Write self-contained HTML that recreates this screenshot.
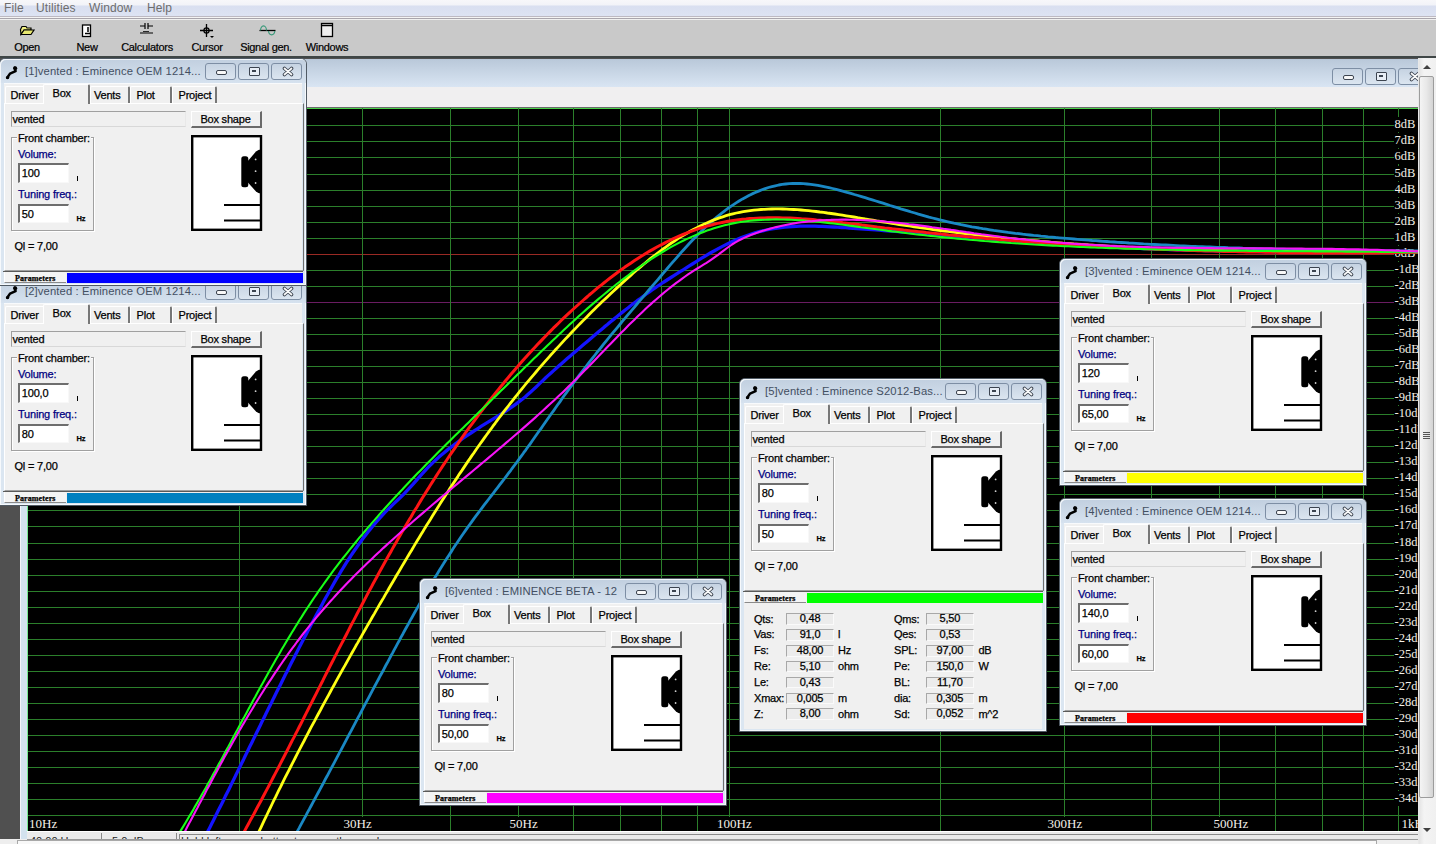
<!DOCTYPE html>
<html><head><meta charset="utf-8"><style>
*{box-sizing:border-box;margin:0;padding:0}
html,body{width:1436px;height:844px;overflow:hidden}
body{position:relative;background:#505050;font-family:"Liberation Sans",sans-serif;font-size:11px;color:#000}
.a{position:absolute}
.t{position:absolute;white-space:nowrap;line-height:1}
.cl{-webkit-text-stroke:0.25px currentColor}
.cl svg{-webkit-text-stroke:0}
.menu{left:0;top:0;width:1436px;height:16px;background:linear-gradient(#f7f7fa 0,#f2f3f8 5px,#d9dff0 6px,#dde3f3 16px)}
.menu span{position:absolute;top:1px;font-size:12px;letter-spacing:0.1px;color:#6d6d6d}
.tb{left:0;top:16px;width:1436px;height:43px;background:#c8c8c8;border-top:1px solid #b8b4bc}
.tbl{position:absolute;top:26px;font-size:11px;color:#000}
.dl{position:absolute;left:0;width:1436px}
.gx{position:absolute;background:#2b7f2b}
.lab{position:absolute;font-family:"Liberation Serif",serif;color:#f4f0e8;background:#000;white-space:nowrap}
</style></head><body>

<div class="a menu">
<span style="left:4px">File</span>
<span style="left:36px">Utilities</span>
<span style="left:89px">Window</span>
<span style="left:147px">Help</span>
</div>
<div class="a" style="left:0;top:16px;width:1436px;height:1px;background:#bdb9c2"></div>
<div class="a" style="left:0;top:17px;width:1436px;height:1px;background:#f4f4f4"></div>
<div class="a" style="left:0;top:18px;width:1436px;height:1px;background:#a9a5ad"></div>
<div class="a" style="left:0;top:19px;width:1436px;height:1px;background:#f0f0f0"></div>
<div class="a" style="left:0;top:20px;width:1436px;height:37px;background:#c9c9c9"></div>
<div class="a" style="left:0;top:56px;width:1436px;height:2px;background:#3f4646"></div>
<div class="t" style="left:-13px;width:80px;text-align:center;top:42px;font-size:11px;letter-spacing:-0.3px;-webkit-text-stroke:0.2px #000">Open</div>
<div class="t" style="left:47px;width:80px;text-align:center;top:42px;font-size:11px;letter-spacing:-0.3px;-webkit-text-stroke:0.2px #000">New</div>
<div class="t" style="left:107px;width:80px;text-align:center;top:42px;font-size:11px;letter-spacing:-0.3px;-webkit-text-stroke:0.2px #000">Calculators</div>
<div class="t" style="left:167px;width:80px;text-align:center;top:42px;font-size:11px;letter-spacing:-0.3px;-webkit-text-stroke:0.2px #000">Cursor</div>
<div class="t" style="left:226px;width:80px;text-align:center;top:42px;font-size:11px;letter-spacing:-0.3px;-webkit-text-stroke:0.2px #000">Signal gen.</div>
<div class="t" style="left:287px;width:80px;text-align:center;top:42px;font-size:11px;letter-spacing:-0.3px;-webkit-text-stroke:0.2px #000">Windows</div>
<svg class="a" style="left:0;top:20px" width="360" height="20" viewBox="0 0 360 20">
<path d="M20.5 9.5 L22 6.5 L26 6.5 L27 8 L31 8 L31 10 L24 10 L21 14.5 Z" fill="#f0f080" stroke="#000" stroke-width="1.2"/>
<path d="M21 14.5 L24 10 L34 10 L31 14.5 Z" fill="#e8e870" stroke="#000" stroke-width="1.2"/>
<rect x="82.5" y="5" width="8" height="11.5" fill="#fff" stroke="#000" stroke-width="1.3"/>
<path d="M88 7 V12 M85 13.5 H90" stroke="#000" stroke-width="1.5"/>
<path d="M140 6 H145 M148 6 H153 M145 3 V9 M148 3 V9 M140 13 H153" stroke="#000" stroke-width="1.2" fill="none"/>
<path d="M143 12 l1 -1 l1 1 l1 -1 l1 1 l1 -1 l1 1" stroke="#000" stroke-width="0.8" fill="none"/>
<path d="M200 10.5 H213 M206.5 4 V17" stroke="#000" stroke-width="1.3"/>
<circle cx="206.5" cy="10.5" r="2.6" fill="none" stroke="#000" stroke-width="1.2"/>
<path d="M210 16 h4 l-2 2 z" fill="#000"/>
<path d="M259.5 10.5 H275.5" stroke="#000" stroke-width="1.3"/>
<path d="M260.5 10.5 A3 4.6 0 0 1 266.5 10.5" stroke="#3a9a7a" stroke-width="1.2" fill="none"/>
<path d="M268.5 11 A3.2 4.6 0 0 0 274.8 11" stroke="#3a9a7a" stroke-width="1.2" fill="none"/>
<rect x="321.5" y="3.5" width="11" height="13" fill="#eee" stroke="#000" stroke-width="1.3"/>
<path d="M321.5 5.5 H332.5" stroke="#000" stroke-width="1.5"/>
</svg>
<div class="a" style="left:20px;top:59px;width:1400px;height:28px;background:linear-gradient(#b9c8d9,#d9e5f3)"></div>
<div class="a" style="left:20px;top:87px;width:1400px;height:21px;background:#f0eff0"></div>
<div class="a" style="left:20px;top:107px;width:1400px;height:1px;background:#6a6a6a"></div>
<div class="a" style="left:20px;top:59px;width:1px;height:785px;background:#f4f4fa"></div>
<div class="a" style="left:21px;top:87px;width:6px;height:757px;background:#d3e2ee"></div>
<div class="a" style="left:1332px;top:68px;width:31px;height:17px;border:1px solid #7d8ea4;border-radius:3px;background:linear-gradient(#c6d3e2,#dbe5f0);"><div class="a" style="left:9.5px;top:6px;width:11px;height:5px;border:1px solid #3c4450;border-radius:2px;background:#f8f8f8"></div></div>
<div class="a" style="left:1365px;top:68px;width:31px;height:17px;border:1px solid #7d8ea4;border-radius:3px;background:linear-gradient(#c6d3e2,#dbe5f0);"><div class="a" style="left:9.5px;top:2.5px;width:11px;height:9px;border:1.5px solid #3c4450;border-radius:1px;background:#e8eef6"><div class="a" style="left:2px;top:2px;width:4px;height:2px;border:1px solid #3c4450"></div></div></div>
<div class="a" style="left:1398px;top:68px;width:31px;height:17px;border:1px solid #7d8ea4;border-radius:3px;background:linear-gradient(#c6d3e2,#dbe5f0);"><svg class="a" style="left:8.5px;top:1.5px" width="14" height="11" viewBox="0 0 14 11"><path d="M3.5 2.5 L10.5 8.5 M10.5 2.5 L3.5 8.5" stroke="#3c4450" stroke-width="3.6" stroke-linecap="round"/><path d="M3.5 2.5 L10.5 8.5 M10.5 2.5 L3.5 8.5" stroke="#fafafa" stroke-width="1.7" stroke-linecap="round"/></svg></div>
<div class="a" style="left:27px;top:108px;width:1391px;height:723px;background:#000;overflow:hidden">
<div class="a" style="left:0;top:0px;width:1391px;height:1px;background:#48d048"></div>
<div class="a" style="left:0;top:17px;width:1391px;height:1px;background:#2b7f2b"></div>
<div class="a" style="left:0;top:33px;width:1391px;height:1px;background:#2b7f2b"></div>
<div class="a" style="left:0;top:49px;width:1391px;height:1px;background:#2b7f2b"></div>
<div class="a" style="left:0;top:66px;width:1391px;height:1px;background:#2b7f2b"></div>
<div class="a" style="left:0;top:82px;width:1391px;height:1px;background:#2b7f2b"></div>
<div class="a" style="left:0;top:98px;width:1391px;height:1px;background:#2b7f2b"></div>
<div class="a" style="left:0;top:114px;width:1391px;height:1px;background:#2b7f2b"></div>
<div class="a" style="left:0;top:130px;width:1391px;height:1px;background:#2b7f2b"></div>
<div class="a" style="left:0;top:146px;width:1391px;height:1px;background:#9a2a24"></div>
<div class="a" style="left:0;top:162px;width:1391px;height:1px;background:#2b7f2b"></div>
<div class="a" style="left:0;top:178px;width:1391px;height:1px;background:#2b7f2b"></div>
<div class="a" style="left:0;top:194px;width:1391px;height:1px;background:#6a1c62"></div>
<div class="a" style="left:0;top:210px;width:1391px;height:1px;background:#2b7f2b"></div>
<div class="a" style="left:0;top:226px;width:1391px;height:1px;background:#2b7f2b"></div>
<div class="a" style="left:0;top:242px;width:1391px;height:1px;background:#2b7f2b"></div>
<div class="a" style="left:0;top:258px;width:1391px;height:1px;background:#2b7f2b"></div>
<div class="a" style="left:0;top:274px;width:1391px;height:1px;background:#2b7f2b"></div>
<div class="a" style="left:0;top:290px;width:1391px;height:1px;background:#2b7f2b"></div>
<div class="a" style="left:0;top:306px;width:1391px;height:1px;background:#2b7f2b"></div>
<div class="a" style="left:0;top:322px;width:1391px;height:1px;background:#2b7f2b"></div>
<div class="a" style="left:0;top:338px;width:1391px;height:1px;background:#2b7f2b"></div>
<div class="a" style="left:0;top:354px;width:1391px;height:1px;background:#2b7f2b"></div>
<div class="a" style="left:0;top:370px;width:1391px;height:1px;background:#2b7f2b"></div>
<div class="a" style="left:0;top:386px;width:1391px;height:1px;background:#2b7f2b"></div>
<div class="a" style="left:0;top:402px;width:1391px;height:1px;background:#2b7f2b"></div>
<div class="a" style="left:0;top:418px;width:1391px;height:1px;background:#2b7f2b"></div>
<div class="a" style="left:0;top:435px;width:1391px;height:1px;background:#2b7f2b"></div>
<div class="a" style="left:0;top:451px;width:1391px;height:1px;background:#2b7f2b"></div>
<div class="a" style="left:0;top:467px;width:1391px;height:1px;background:#2b7f2b"></div>
<div class="a" style="left:0;top:483px;width:1391px;height:1px;background:#2b7f2b"></div>
<div class="a" style="left:0;top:499px;width:1391px;height:1px;background:#2b7f2b"></div>
<div class="a" style="left:0;top:515px;width:1391px;height:1px;background:#2b7f2b"></div>
<div class="a" style="left:0;top:531px;width:1391px;height:1px;background:#2b7f2b"></div>
<div class="a" style="left:0;top:547px;width:1391px;height:1px;background:#2b7f2b"></div>
<div class="a" style="left:0;top:563px;width:1391px;height:1px;background:#2b7f2b"></div>
<div class="a" style="left:0;top:579px;width:1391px;height:1px;background:#2b7f2b"></div>
<div class="a" style="left:0;top:595px;width:1391px;height:1px;background:#2b7f2b"></div>
<div class="a" style="left:0;top:611px;width:1391px;height:1px;background:#2b7f2b"></div>
<div class="a" style="left:0;top:627px;width:1391px;height:1px;background:#2b7f2b"></div>
<div class="a" style="left:0;top:643px;width:1391px;height:1px;background:#2b7f2b"></div>
<div class="a" style="left:0;top:659px;width:1391px;height:1px;background:#2b7f2b"></div>
<div class="a" style="left:0;top:675px;width:1391px;height:1px;background:#2b7f2b"></div>
<div class="a" style="left:0;top:691px;width:1391px;height:1px;background:#2b7f2b"></div>
<div class="a" style="left:0;top:707px;width:1391px;height:1px;background:#2b7f2b"></div>
<div class="a" style="left:0px;top:0;width:1px;height:723px;background:#78e890"></div>
<div class="a" style="left:212px;top:0;width:1px;height:723px;background:#2b7f2b"></div>
<div class="a" style="left:335px;top:0;width:1px;height:723px;background:#2b7f2b"></div>
<div class="a" style="left:423px;top:0;width:1px;height:723px;background:#2b7f2b"></div>
<div class="a" style="left:491px;top:0;width:1px;height:723px;background:#2b7f2b"></div>
<div class="a" style="left:546px;top:0;width:1px;height:723px;background:#2b7f2b"></div>
<div class="a" style="left:593px;top:0;width:1px;height:723px;background:#2b7f2b"></div>
<div class="a" style="left:634px;top:0;width:1px;height:723px;background:#2b7f2b"></div>
<div class="a" style="left:670px;top:0;width:1px;height:723px;background:#2b7f2b"></div>
<div class="a" style="left:702px;top:0;width:1px;height:723px;background:#2b7f2b"></div>
<div class="a" style="left:913px;top:0;width:1px;height:723px;background:#2b7f2b"></div>
<div class="a" style="left:1037px;top:0;width:1px;height:723px;background:#2b7f2b"></div>
<div class="a" style="left:1124px;top:0;width:1px;height:723px;background:#2b7f2b"></div>
<div class="a" style="left:1192px;top:0;width:1px;height:723px;background:#2b7f2b"></div>
<div class="a" style="left:1248px;top:0;width:1px;height:723px;background:#2b7f2b"></div>
<div class="a" style="left:1295px;top:0;width:1px;height:723px;background:#2b7f2b"></div>
<div class="a" style="left:1336px;top:0;width:1px;height:723px;background:#2b7f2b"></div>
<div class="a" style="left:1371px;top:0;width:1px;height:723px;background:#2b7f2b"></div>
<div class="a" style="left:1404px;top:0;width:1px;height:723px;background:#2b7f2b"></div>
<div class="lab" style="left:1.0px;top:708.8px;padding:0 1px;font-size:13px;line-height:13px;height:14px">10Hz</div>
<div class="lab" style="left:315.5px;top:708.8px;padding:0 1px;font-size:13px;line-height:13px;height:14px">30Hz</div>
<div class="lab" style="left:481.5px;top:708.8px;padding:0 1px;font-size:13px;line-height:13px;height:14px">50Hz</div>
<div class="lab" style="left:689.0px;top:708.8px;padding:0 1px;font-size:13px;line-height:13px;height:14px">100Hz</div>
<div class="lab" style="left:1019.5px;top:708.8px;padding:0 1px;font-size:13px;line-height:13px;height:14px">300Hz</div>
<div class="lab" style="left:1185.5px;top:708.8px;padding:0 1px;font-size:13px;line-height:13px;height:14px">500Hz</div>
<div class="lab" style="left:1373.5px;top:708.8px;padding:0 1px;font-size:13px;line-height:13px;height:14px">1kHz</div>
<div class="lab" style="left:1366.5px;top:8.5px;padding-left:1px;padding-top:1px;font-size:12.5px;line-height:12.5px;height:15px;width:40px">8dB</div>
<div class="lab" style="left:1366.5px;top:24.5px;padding-left:1px;padding-top:1px;font-size:12.5px;line-height:12.5px;height:15px;width:40px">7dB</div>
<div class="lab" style="left:1366.5px;top:40.5px;padding-left:1px;padding-top:1px;font-size:12.5px;line-height:12.5px;height:15px;width:40px">6dB</div>
<div class="lab" style="left:1366.5px;top:57.5px;padding-left:1px;padding-top:1px;font-size:12.5px;line-height:12.5px;height:15px;width:40px">5dB</div>
<div class="lab" style="left:1366.5px;top:73.5px;padding-left:1px;padding-top:1px;font-size:12.5px;line-height:12.5px;height:15px;width:40px">4dB</div>
<div class="lab" style="left:1366.5px;top:89.5px;padding-left:1px;padding-top:1px;font-size:12.5px;line-height:12.5px;height:15px;width:40px">3dB</div>
<div class="lab" style="left:1366.5px;top:105.5px;padding-left:1px;padding-top:1px;font-size:12.5px;line-height:12.5px;height:15px;width:40px">2dB</div>
<div class="lab" style="left:1366.5px;top:121.5px;padding-left:1px;padding-top:1px;font-size:12.5px;line-height:12.5px;height:15px;width:40px">1dB</div>
<div class="lab" style="left:1366.5px;top:137.5px;padding-left:1px;padding-top:1px;font-size:12.5px;line-height:12.5px;height:15px;width:40px">0dB</div>
<div class="lab" style="left:1366.5px;top:153.5px;padding-left:1px;padding-top:1px;font-size:12.5px;line-height:12.5px;height:15px;width:40px">-1dB</div>
<div class="lab" style="left:1366.5px;top:169.5px;padding-left:1px;padding-top:1px;font-size:12.5px;line-height:12.5px;height:15px;width:40px">-2dB</div>
<div class="lab" style="left:1366.5px;top:185.5px;padding-left:1px;padding-top:1px;font-size:12.5px;line-height:12.5px;height:15px;width:40px">-3dB</div>
<div class="lab" style="left:1366.5px;top:201.5px;padding-left:1px;padding-top:1px;font-size:12.5px;line-height:12.5px;height:15px;width:40px">-4dB</div>
<div class="lab" style="left:1366.5px;top:217.5px;padding-left:1px;padding-top:1px;font-size:12.5px;line-height:12.5px;height:15px;width:40px">-5dB</div>
<div class="lab" style="left:1366.5px;top:233.5px;padding-left:1px;padding-top:1px;font-size:12.5px;line-height:12.5px;height:15px;width:40px">-6dB</div>
<div class="lab" style="left:1366.5px;top:249.5px;padding-left:1px;padding-top:1px;font-size:12.5px;line-height:12.5px;height:15px;width:40px">-7dB</div>
<div class="lab" style="left:1366.5px;top:265.5px;padding-left:1px;padding-top:1px;font-size:12.5px;line-height:12.5px;height:15px;width:40px">-8dB</div>
<div class="lab" style="left:1366.5px;top:281.5px;padding-left:1px;padding-top:1px;font-size:12.5px;line-height:12.5px;height:15px;width:40px">-9dB</div>
<div class="lab" style="left:1366.5px;top:297.5px;padding-left:1px;padding-top:1px;font-size:12.5px;line-height:12.5px;height:15px;width:40px">-10dB</div>
<div class="lab" style="left:1366.5px;top:313.5px;padding-left:1px;padding-top:1px;font-size:12.5px;line-height:12.5px;height:15px;width:40px">-11dB</div>
<div class="lab" style="left:1366.5px;top:329.5px;padding-left:1px;padding-top:1px;font-size:12.5px;line-height:12.5px;height:15px;width:40px">-12dB</div>
<div class="lab" style="left:1366.5px;top:345.5px;padding-left:1px;padding-top:1px;font-size:12.5px;line-height:12.5px;height:15px;width:40px">-13dB</div>
<div class="lab" style="left:1366.5px;top:361.5px;padding-left:1px;padding-top:1px;font-size:12.5px;line-height:12.5px;height:15px;width:40px">-14dB</div>
<div class="lab" style="left:1366.5px;top:377.5px;padding-left:1px;padding-top:1px;font-size:12.5px;line-height:12.5px;height:15px;width:40px">-15dB</div>
<div class="lab" style="left:1366.5px;top:393.5px;padding-left:1px;padding-top:1px;font-size:12.5px;line-height:12.5px;height:15px;width:40px">-16dB</div>
<div class="lab" style="left:1366.5px;top:409.5px;padding-left:1px;padding-top:1px;font-size:12.5px;line-height:12.5px;height:15px;width:40px">-17dB</div>
<div class="lab" style="left:1366.5px;top:426.5px;padding-left:1px;padding-top:1px;font-size:12.5px;line-height:12.5px;height:15px;width:40px">-18dB</div>
<div class="lab" style="left:1366.5px;top:442.5px;padding-left:1px;padding-top:1px;font-size:12.5px;line-height:12.5px;height:15px;width:40px">-19dB</div>
<div class="lab" style="left:1366.5px;top:458.5px;padding-left:1px;padding-top:1px;font-size:12.5px;line-height:12.5px;height:15px;width:40px">-20dB</div>
<div class="lab" style="left:1366.5px;top:474.5px;padding-left:1px;padding-top:1px;font-size:12.5px;line-height:12.5px;height:15px;width:40px">-21dB</div>
<div class="lab" style="left:1366.5px;top:490.5px;padding-left:1px;padding-top:1px;font-size:12.5px;line-height:12.5px;height:15px;width:40px">-22dB</div>
<div class="lab" style="left:1366.5px;top:506.5px;padding-left:1px;padding-top:1px;font-size:12.5px;line-height:12.5px;height:15px;width:40px">-23dB</div>
<div class="lab" style="left:1366.5px;top:522.5px;padding-left:1px;padding-top:1px;font-size:12.5px;line-height:12.5px;height:15px;width:40px">-24dB</div>
<div class="lab" style="left:1366.5px;top:538.5px;padding-left:1px;padding-top:1px;font-size:12.5px;line-height:12.5px;height:15px;width:40px">-25dB</div>
<div class="lab" style="left:1366.5px;top:554.5px;padding-left:1px;padding-top:1px;font-size:12.5px;line-height:12.5px;height:15px;width:40px">-26dB</div>
<div class="lab" style="left:1366.5px;top:570.5px;padding-left:1px;padding-top:1px;font-size:12.5px;line-height:12.5px;height:15px;width:40px">-27dB</div>
<div class="lab" style="left:1366.5px;top:586.5px;padding-left:1px;padding-top:1px;font-size:12.5px;line-height:12.5px;height:15px;width:40px">-28dB</div>
<div class="lab" style="left:1366.5px;top:602.5px;padding-left:1px;padding-top:1px;font-size:12.5px;line-height:12.5px;height:15px;width:40px">-29dB</div>
<div class="lab" style="left:1366.5px;top:618.5px;padding-left:1px;padding-top:1px;font-size:12.5px;line-height:12.5px;height:15px;width:40px">-30dB</div>
<div class="lab" style="left:1366.5px;top:634.5px;padding-left:1px;padding-top:1px;font-size:12.5px;line-height:12.5px;height:15px;width:40px">-31dB</div>
<div class="lab" style="left:1366.5px;top:650.5px;padding-left:1px;padding-top:1px;font-size:12.5px;line-height:12.5px;height:15px;width:40px">-32dB</div>
<div class="lab" style="left:1366.5px;top:666.5px;padding-left:1px;padding-top:1px;font-size:12.5px;line-height:12.5px;height:15px;width:40px">-33dB</div>
<div class="lab" style="left:1366.5px;top:682.5px;padding-left:1px;padding-top:1px;font-size:12.5px;line-height:12.5px;height:15px;width:40px">-34dB</div>
<svg class="a" style="left:0;top:0" width="1391" height="723" viewBox="27 108 1391 723">
<path d="M202.9 840.9 L205.6 835.6 L208.4 830.2 L210.1 826.9 L211.8 823.5 L213.5 820.2 L215.2 816.8 L216.8 813.5 L218.5 810.1 L220.2 806.7 L221.9 803.4 L223.6 800.0 L225.2 796.6 L226.9 793.2 L228.6 789.9 L230.3 786.5 L231.9 783.1 L233.6 779.7 L235.3 776.3 L236.9 772.9 L238.6 769.6 L240.2 766.2 L241.9 762.8 L243.6 759.4 L245.2 756.0 L246.9 752.6 L248.5 749.2 L250.2 745.8 L251.9 742.4 L253.5 739.1 L255.2 735.7 L256.8 732.3 L258.5 728.9 L260.2 725.5 L261.8 722.1 L263.5 718.7 L265.2 715.3 L266.8 711.9 L268.5 708.5 L270.2 705.2 L271.9 701.8 L273.5 698.4 L275.2 695.0 L276.9 691.6 L278.6 688.2 L280.3 684.9 L282.0 681.5 L283.7 678.1 L285.3 674.7 L287.1 671.4 L288.8 668.0 L290.5 664.6 L292.2 661.3 L293.9 657.9 L295.6 654.5 L297.3 651.2 L299.1 647.8 L300.8 644.5 L302.6 641.1 L304.3 637.8 L306.1 634.4 L307.8 631.1 L309.6 627.7 L311.3 624.4 L313.1 621.1 L314.9 617.7 L316.7 614.4 L318.5 611.1 L320.3 607.8 L322.1 604.5 L323.9 601.1 L325.7 597.8 L327.6 594.5 L329.4 591.3 L331.3 588.0 L333.1 584.7 L335.0 581.4 L336.9 578.2 L338.9 575.0 L340.8 571.7 L342.8 568.5 L344.7 565.4 L346.7 562.2 L348.8 559.0 L350.8 555.9 L352.9 552.8 L355.0 549.7 L357.1 546.7 L359.3 543.6 L361.5 540.6 L363.7 537.6 L365.9 534.7 L368.2 531.8 L370.5 528.9 L372.9 526.0 L375.3 523.2 L377.7 520.4 L380.2 517.6 L382.7 514.9 L385.2 512.2 L387.8 509.6 L390.5 507.0 L393.1 504.4 L395.8 501.8 L398.5 499.3 L401.1 496.8 L403.6 494.3 L406.1 491.7 L408.5 489.2 L410.8 486.6 L413.1 484.1 L415.3 481.6 L417.5 479.1 L419.7 476.6 L421.9 474.1 L424.2 471.6 L426.5 469.1 L428.8 466.7 L431.2 464.3 L433.7 461.9 L436.3 459.5 L438.9 457.1 L441.6 454.8 L444.4 452.4 L447.2 450.1 L450.1 447.8 L453.1 445.6 L456.1 443.3 L459.1 441.1 L462.2 438.9 L465.4 436.7 L468.5 434.6 L471.7 432.5 L474.9 430.4 L478.2 428.3 L481.4 426.2 L484.7 424.2 L488.0 422.2 L491.3 420.1 L494.5 418.1 L497.8 416.1 L501.0 414.1 L504.2 412.0 L507.3 410.0 L510.5 407.9 L513.5 405.8 L516.5 403.6 L519.4 401.4 L522.3 399.2 L525.1 397.0 L527.8 394.6 L530.4 392.3 L533.0 389.9 L535.6 387.5 L538.1 385.1 L540.6 382.6 L543.2 380.2 L545.7 377.8 L548.3 375.4 L551.0 373.0 L553.6 370.6 L556.3 368.2 L559.0 365.8 L561.7 363.4 L564.5 361.0 L567.2 358.6 L570.0 356.2 L572.8 353.8 L575.6 351.4 L578.5 349.0 L581.3 346.6 L584.2 344.1 L587.0 341.7 L589.9 339.2 L592.8 336.8 L595.7 334.3 L598.6 331.8 L601.5 329.4 L604.4 326.9 L607.4 324.5 L610.3 322.0 L613.3 319.6 L616.2 317.2 L619.2 314.8 L622.2 312.4 L625.2 310.0 L628.2 307.7 L631.2 305.3 L634.2 303.0 L637.2 300.7 L640.3 298.5 L643.3 296.2 L646.3 294.0 L649.4 291.8 L652.4 289.7 L655.5 287.6 L658.6 285.5 L661.6 283.5 L664.7 281.5 L667.8 279.5 L670.9 277.5 L673.9 275.6 L677.0 273.7 L680.1 271.7 L683.2 269.8 L686.2 267.9 L689.3 265.9 L692.4 264.0 L695.4 262.1 L698.5 260.1 L701.7 258.2 L704.8 256.3 L708.0 254.4 L711.2 252.5 L714.5 250.7 L717.8 248.9 L721.1 247.1 L724.4 245.4 L727.8 243.7 L731.2 242.1 L734.6 240.6 L738.0 239.1 L741.5 237.6 L745.0 236.3 L748.5 235.0 L752.0 233.8 L755.6 232.7 L759.2 231.7 L762.8 230.8 L766.4 230.0 L770.1 229.2 L773.7 228.6 L777.4 228.0 L781.1 227.6 L784.8 227.2 L788.5 226.8 L792.3 226.6 L796.0 226.4 L799.8 226.2 L803.5 226.2 L807.3 226.1 L811.1 226.1 L814.9 226.2 L818.7 226.3 L822.5 226.4 L826.3 226.6 L830.1 226.8 L834.0 227.0 L837.8 227.2 L841.6 227.5 L845.4 227.7 L849.2 228.0 L853.1 228.3 L856.9 228.5 L860.7 228.8 L864.5 229.1 L868.3 229.4 L872.1 229.7 L875.9 229.9 L879.7 230.2 L883.5 230.5 L887.3 230.8 L891.1 231.1 L894.9 231.4 L898.7 231.7 L902.5 232.0 L906.3 232.2 L910.0 232.5 L913.8 232.8 L917.6 233.1 L921.4 233.4 L925.2 233.7 L928.9 234.0 L932.7 234.3 L936.5 234.6 L940.3 234.9 L944.0 235.2 L947.8 235.5 L951.6 235.8 L955.3 236.1 L959.1 236.4 L962.9 236.7 L966.6 237.0 L970.4 237.3 L974.1 237.6 L977.9 237.9 L981.7 238.2 L985.4 238.4 L989.2 238.7 L992.9 239.0 L996.7 239.3 L1000.4 239.6 L1004.2 239.9 L1008.0 240.2 L1011.7 240.5 L1015.5 240.7 L1019.2 241.0 L1023.0 241.3 L1026.7 241.6 L1030.5 241.8 L1034.2 242.1 L1038.0 242.4 L1041.7 242.6 L1045.5 242.9 L1049.2 243.2 L1053.0 243.4 L1056.7 243.7 L1060.5 243.9 L1064.3 244.2 L1068.0 244.4 L1071.8 244.7 L1075.5 244.9 L1079.3 245.1 L1083.0 245.4 L1086.8 245.6 L1090.5 245.8 L1094.3 246.0 L1098.0 246.3 L1101.8 246.5 L1105.6 246.7 L1109.3 246.9 L1113.1 247.1 L1116.8 247.3 L1120.6 247.5 L1124.4 247.7 L1128.1 247.9 L1131.9 248.0 L1135.7 248.2 L1139.4 248.4 L1143.2 248.6 L1147.0 248.7 L1150.7 248.9 L1154.5 249.0 L1158.3 249.2 L1162.1 249.3 L1165.9 249.4 L1169.6 249.6 L1173.4 249.7 L1177.2 249.8 L1181.0 249.9 L1184.8 250.0 L1188.5 250.2 L1192.3 250.3 L1196.1 250.4 L1199.9 250.4 L1203.7 250.5 L1207.5 250.6 L1211.3 250.7 L1215.1 250.8 L1218.8 250.9 L1222.6 250.9 L1226.4 251.0 L1230.2 251.1 L1234.0 251.1 L1237.8 251.2 L1241.6 251.2 L1245.4 251.3 L1249.2 251.3 L1253.0 251.4 L1256.8 251.4 L1260.6 251.5 L1264.4 251.5 L1268.2 251.5 L1271.9 251.6 L1275.7 251.6 L1279.5 251.6 L1283.3 251.7 L1287.1 251.7 L1290.9 251.7 L1294.7 251.7 L1298.5 251.8 L1302.3 251.8 L1306.1 251.8 L1309.9 251.8 L1313.6 251.8 L1317.4 251.8 L1321.2 251.8 L1325.0 251.8 L1328.8 251.9 L1332.6 251.9 L1336.4 251.9 L1340.1 251.9 L1343.9 251.9 L1347.7 251.9 L1351.5 251.9 L1355.3 251.9 L1359.0 251.9 L1362.8 251.9 L1366.6 251.9 L1370.3 251.9 L1374.1 251.9 L1377.9 251.9 L1381.7 251.9 L1385.4 251.9 L1389.2 251.9 L1392.9 251.9 L1396.7 252.0 L1400.5 252.0 L1404.2 252.0 L1408.0 252.0 L1411.7 252.0 L1415.5 252.0 L1425.0 252.0" fill="none" stroke="#1414ff" stroke-width="3.3" stroke-linejoin="round"/>
<path d="M291.5 841.8 L294.4 836.6 L297.3 831.3 L299.1 828.1 L300.8 824.9 L302.6 821.6 L304.3 818.4 L306.1 815.2 L307.8 811.9 L309.6 808.7 L311.3 805.5 L313.1 802.2 L314.8 799.0 L316.6 795.7 L318.3 792.5 L320.0 789.3 L321.8 786.0 L323.5 782.8 L325.2 779.5 L327.0 776.3 L328.7 773.1 L330.4 769.8 L332.1 766.6 L333.9 763.3 L335.6 760.1 L337.3 756.8 L339.0 753.6 L340.8 750.4 L342.5 747.1 L344.2 743.9 L345.9 740.6 L347.6 737.4 L349.3 734.1 L351.1 730.9 L352.8 727.6 L354.5 724.4 L356.2 721.1 L357.9 717.9 L359.7 714.7 L361.4 711.4 L363.1 708.2 L364.8 704.9 L366.5 701.7 L368.3 698.4 L370.0 695.2 L371.7 691.9 L373.4 688.7 L375.1 685.5 L376.9 682.2 L378.6 679.0 L380.3 675.7 L382.1 672.5 L383.8 669.3 L385.5 666.0 L387.3 662.8 L389.0 659.6 L390.7 656.3 L392.5 653.1 L394.2 649.9 L396.0 646.6 L397.7 643.4 L399.5 640.2 L401.2 636.9 L403.0 633.7 L404.7 630.5 L406.5 627.3 L408.3 624.1 L410.0 620.9 L411.8 617.7 L413.6 614.5 L415.4 611.3 L417.2 608.1 L419.0 604.9 L420.8 601.7 L422.6 598.5 L424.5 595.4 L426.3 592.2 L428.2 589.1 L430.0 585.9 L431.9 582.8 L433.7 579.6 L435.6 576.5 L437.5 573.4 L439.4 570.3 L441.3 567.2 L443.3 564.1 L445.2 561.0 L447.1 558.0 L449.1 554.9 L451.1 551.9 L453.0 548.8 L455.0 545.8 L457.1 542.8 L459.1 539.8 L461.1 536.8 L463.2 533.8 L465.2 530.9 L467.3 527.9 L469.4 525.0 L471.5 522.1 L473.6 519.1 L475.8 516.2 L477.9 513.4 L480.1 510.5 L482.2 507.6 L484.4 504.7 L486.6 501.9 L488.8 499.0 L491.0 496.1 L493.2 493.3 L495.4 490.4 L497.6 487.6 L499.8 484.7 L502.0 481.8 L504.2 479.0 L506.4 476.1 L508.6 473.2 L510.8 470.3 L512.9 467.4 L515.1 464.5 L517.3 461.6 L519.4 458.6 L521.6 455.7 L523.7 452.7 L525.9 449.8 L528.0 446.8 L530.2 443.8 L532.3 440.8 L534.4 437.8 L536.5 434.8 L538.6 431.8 L540.8 428.8 L542.9 425.8 L545.0 422.8 L547.1 419.8 L549.2 416.8 L551.3 413.8 L553.5 410.8 L555.6 407.8 L557.7 404.8 L559.9 401.8 L562.0 398.8 L564.1 395.8 L566.3 392.8 L568.4 389.9 L570.6 386.9 L572.8 384.0 L575.0 381.0 L577.1 378.1 L579.3 375.2 L581.5 372.3 L583.8 369.4 L586.0 366.5 L588.2 363.6 L590.5 360.7 L592.7 357.9 L595.0 355.0 L597.2 352.2 L599.5 349.3 L601.8 346.5 L604.0 343.7 L606.3 340.9 L608.6 338.0 L610.9 335.2 L613.2 332.4 L615.6 329.6 L617.9 326.8 L620.2 324.0 L622.5 321.2 L624.9 318.4 L627.2 315.6 L629.6 312.8 L631.9 310.1 L634.3 307.3 L636.6 304.5 L639.0 301.7 L641.4 298.9 L643.8 296.1 L646.1 293.3 L648.5 290.5 L650.9 287.7 L653.3 284.9 L655.7 282.1 L658.1 279.3 L660.5 276.5 L662.9 273.7 L665.3 270.8 L667.7 268.0 L670.1 265.2 L672.5 262.4 L675.0 259.6 L677.4 256.8 L679.9 254.0 L682.3 251.2 L684.8 248.5 L687.3 245.7 L689.8 243.0 L692.4 240.3 L694.9 237.7 L697.5 235.0 L700.1 232.4 L702.7 229.9 L705.3 227.3 L708.0 224.8 L710.7 222.4 L713.4 220.0 L716.2 217.6 L719.0 215.3 L721.8 213.1 L724.7 210.8 L727.6 208.7 L730.5 206.6 L733.5 204.6 L736.5 202.6 L739.5 200.7 L742.6 198.9 L745.8 197.2 L748.9 195.5 L752.1 193.9 L755.3 192.5 L758.6 191.1 L761.9 189.8 L765.2 188.6 L768.5 187.5 L771.9 186.6 L775.3 185.8 L778.7 185.0 L782.2 184.4 L785.7 184.0 L789.2 183.7 L792.7 183.5 L796.3 183.4 L799.9 183.5 L803.4 183.7 L807.1 184.0 L810.7 184.4 L814.3 184.9 L817.9 185.4 L821.6 186.1 L825.2 186.8 L828.9 187.6 L832.6 188.5 L836.2 189.4 L839.9 190.4 L843.5 191.3 L847.1 192.4 L850.8 193.4 L854.4 194.5 L858.0 195.5 L861.6 196.6 L865.2 197.7 L868.8 198.8 L872.3 199.9 L875.9 201.0 L879.5 202.1 L883.0 203.2 L886.6 204.3 L890.1 205.5 L893.7 206.6 L897.2 207.7 L900.7 208.8 L904.3 209.8 L907.8 210.9 L911.3 212.0 L914.9 213.0 L918.4 214.1 L921.9 215.1 L925.5 216.1 L929.0 217.1 L932.5 218.0 L936.1 218.9 L939.7 219.8 L943.2 220.7 L946.8 221.6 L950.3 222.4 L953.9 223.2 L957.5 223.9 L961.1 224.7 L964.7 225.4 L968.3 226.1 L971.9 226.8 L975.5 227.4 L979.1 228.0 L982.7 228.7 L986.3 229.2 L989.9 229.8 L993.6 230.4 L997.2 230.9 L1000.8 231.4 L1004.4 231.9 L1008.1 232.4 L1011.7 232.8 L1015.4 233.3 L1019.0 233.7 L1022.7 234.2 L1026.3 234.6 L1030.0 235.0 L1033.6 235.4 L1037.3 235.7 L1040.9 236.1 L1044.6 236.4 L1048.2 236.8 L1051.9 237.1 L1055.6 237.5 L1059.2 237.8 L1062.9 238.1 L1066.6 238.4 L1070.2 238.7 L1073.9 239.0 L1077.5 239.3 L1081.2 239.6 L1084.9 239.9 L1088.5 240.2 L1092.2 240.5 L1095.9 240.7 L1099.5 241.0 L1103.2 241.3 L1106.9 241.5 L1110.5 241.8 L1114.2 242.0 L1117.9 242.3 L1121.6 242.5 L1125.2 242.7 L1128.9 243.0 L1132.6 243.2 L1136.2 243.4 L1139.9 243.6 L1143.6 243.9 L1147.2 244.1 L1150.9 244.3 L1154.6 244.5 L1158.3 244.7 L1161.9 244.9 L1165.6 245.0 L1169.3 245.2 L1173.0 245.4 L1176.6 245.6 L1180.3 245.8 L1184.0 245.9 L1187.7 246.1 L1191.3 246.3 L1195.0 246.4 L1198.7 246.6 L1202.3 246.7 L1206.0 246.9 L1209.7 247.0 L1213.4 247.1 L1217.1 247.3 L1220.7 247.4 L1224.4 247.5 L1228.1 247.7 L1231.8 247.8 L1235.4 247.9 L1239.1 248.0 L1242.8 248.2 L1246.5 248.3 L1250.1 248.4 L1253.8 248.5 L1257.5 248.6 L1261.2 248.7 L1264.8 248.8 L1268.5 248.9 L1272.2 249.0 L1275.9 249.1 L1279.6 249.1 L1283.2 249.2 L1286.9 249.3 L1290.6 249.4 L1294.3 249.5 L1297.9 249.5 L1301.6 249.6 L1305.3 249.7 L1309.0 249.8 L1312.6 249.8 L1316.3 249.9 L1320.0 249.9 L1323.7 250.0 L1327.3 250.1 L1331.0 250.1 L1334.7 250.2 L1338.4 250.2 L1342.1 250.3 L1345.7 250.3 L1349.4 250.4 L1353.1 250.4 L1356.8 250.5 L1360.4 250.5 L1364.1 250.5 L1367.8 250.6 L1371.5 250.6 L1375.1 250.7 L1378.8 250.7 L1382.5 250.7 L1386.2 250.8 L1389.8 250.8 L1393.5 250.8 L1397.2 250.9 L1400.9 250.9 L1404.5 250.9 L1408.2 250.9 L1411.9 251.0 L1415.5 251.0 L1425.0 251.0" fill="none" stroke="#1a88c4" stroke-width="2.8" stroke-linejoin="round"/>
<path d="M254.3 841.4 L256.9 836.0 L259.4 830.6 L261.0 827.3 L262.6 823.9 L264.1 820.6 L265.7 817.3 L267.3 814.0 L268.9 810.6 L270.5 807.3 L272.1 804.0 L273.7 800.7 L275.4 797.4 L277.0 794.0 L278.6 790.7 L280.3 787.4 L281.9 784.1 L283.6 780.7 L285.2 777.4 L286.9 774.1 L288.6 770.8 L290.3 767.5 L292.0 764.2 L293.7 760.8 L295.4 757.5 L297.1 754.2 L298.8 750.9 L300.5 747.6 L302.2 744.3 L304.0 741.0 L305.7 737.7 L307.4 734.4 L309.2 731.0 L310.9 727.7 L312.7 724.4 L314.5 721.1 L316.2 717.8 L318.0 714.5 L319.8 711.3 L321.5 708.0 L323.3 704.7 L325.1 701.4 L326.9 698.1 L328.7 694.8 L330.5 691.5 L332.3 688.2 L334.1 685.0 L335.9 681.7 L337.7 678.4 L339.5 675.1 L341.3 671.9 L343.1 668.6 L345.0 665.4 L346.8 662.1 L348.6 658.8 L350.4 655.6 L352.3 652.3 L354.1 649.1 L355.9 645.8 L357.8 642.6 L359.6 639.4 L361.5 636.1 L363.3 632.9 L365.1 629.7 L367.0 626.4 L368.8 623.2 L370.7 620.0 L372.5 616.8 L374.4 613.6 L376.2 610.4 L378.1 607.1 L379.9 603.9 L381.8 600.8 L383.7 597.6 L385.5 594.4 L387.4 591.2 L389.2 588.0 L391.1 584.8 L392.9 581.7 L394.8 578.5 L396.6 575.3 L398.5 572.2 L400.4 569.0 L402.2 565.9 L404.1 562.7 L406.0 559.6 L407.8 556.4 L409.7 553.3 L411.6 550.2 L413.4 547.1 L415.3 543.9 L417.2 540.8 L419.1 537.7 L421.0 534.6 L422.9 531.5 L424.7 528.4 L426.6 525.3 L428.6 522.2 L430.5 519.2 L432.4 516.1 L434.3 513.0 L436.2 510.0 L438.1 506.9 L440.1 503.8 L442.0 500.8 L444.0 497.7 L445.9 494.7 L447.9 491.7 L449.8 488.6 L451.8 485.6 L453.8 482.6 L455.8 479.6 L457.8 476.6 L459.7 473.6 L461.8 470.6 L463.8 467.6 L465.8 464.6 L467.8 461.6 L469.9 458.6 L471.9 455.6 L474.0 452.7 L476.0 449.7 L478.1 446.8 L480.2 443.8 L482.3 440.9 L484.4 437.9 L486.5 435.0 L488.6 432.1 L490.8 429.2 L492.9 426.2 L495.1 423.3 L497.2 420.4 L499.4 417.5 L501.6 414.6 L503.8 411.7 L506.0 408.9 L508.3 406.0 L510.5 403.1 L512.7 400.3 L515.0 397.4 L517.3 394.6 L519.6 391.7 L521.9 388.9 L524.2 386.0 L526.5 383.2 L528.9 380.4 L531.2 377.6 L533.6 374.8 L536.0 372.0 L538.4 369.2 L540.8 366.4 L543.2 363.6 L545.6 360.9 L548.1 358.1 L550.5 355.3 L553.0 352.6 L555.5 349.8 L558.0 347.1 L560.5 344.4 L563.0 341.6 L565.5 338.9 L568.1 336.2 L570.6 333.5 L573.2 330.8 L575.8 328.1 L578.4 325.4 L581.0 322.8 L583.6 320.1 L586.3 317.4 L588.9 314.8 L591.6 312.1 L594.2 309.5 L596.9 306.8 L599.6 304.2 L602.3 301.6 L605.1 299.0 L607.8 296.4 L610.6 293.8 L613.3 291.2 L616.1 288.6 L618.9 286.1 L621.7 283.5 L624.5 280.9 L627.3 278.4 L630.2 275.9 L633.0 273.3 L635.9 270.8 L638.8 268.4 L641.7 265.9 L644.6 263.5 L647.5 261.1 L650.4 258.7 L653.4 256.3 L656.4 254.0 L659.3 251.8 L662.3 249.5 L665.4 247.3 L668.4 245.1 L671.4 243.0 L674.5 241.0 L677.6 238.9 L680.7 236.9 L683.8 235.0 L687.0 233.2 L690.1 231.3 L693.3 229.6 L696.5 227.9 L699.7 226.3 L702.9 224.7 L706.2 223.2 L709.5 221.8 L712.8 220.4 L716.1 219.1 L719.4 217.9 L722.8 216.8 L726.1 215.7 L729.5 214.7 L732.9 213.8 L736.4 213.0 L739.8 212.3 L743.3 211.7 L746.8 211.1 L750.3 210.6 L753.9 210.2 L757.4 209.8 L761.0 209.5 L764.6 209.3 L768.2 209.1 L771.8 209.0 L775.4 208.9 L779.0 208.9 L782.7 209.0 L786.4 209.1 L790.0 209.3 L793.7 209.5 L797.4 209.7 L801.1 210.0 L804.9 210.3 L808.6 210.7 L812.3 211.1 L816.1 211.5 L819.8 212.0 L823.6 212.4 L827.4 213.0 L831.1 213.5 L834.9 214.0 L838.7 214.6 L842.5 215.2 L846.2 215.8 L850.0 216.4 L853.8 217.0 L857.6 217.7 L861.4 218.3 L865.2 219.0 L869.0 219.6 L872.8 220.2 L876.5 220.9 L880.3 221.5 L884.1 222.1 L887.9 222.7 L891.7 223.3 L895.4 223.9 L899.2 224.5 L903.0 225.1 L906.7 225.7 L910.5 226.2 L914.2 226.8 L918.0 227.3 L921.7 227.9 L925.5 228.4 L929.2 228.9 L933.0 229.5 L936.7 230.0 L940.5 230.5 L944.2 231.0 L947.9 231.4 L951.6 231.9 L955.4 232.4 L959.1 232.9 L962.8 233.3 L966.5 233.8 L970.3 234.2 L974.0 234.7 L977.7 235.1 L981.4 235.5 L985.1 235.9 L988.8 236.3 L992.5 236.7 L996.3 237.1 L1000.0 237.5 L1003.7 237.9 L1007.4 238.3 L1011.1 238.6 L1014.8 239.0 L1018.5 239.4 L1022.2 239.7 L1025.8 240.1 L1029.5 240.4 L1033.2 240.7 L1036.9 241.0 L1040.6 241.4 L1044.3 241.7 L1048.0 242.0 L1051.7 242.3 L1055.4 242.6 L1059.0 242.9 L1062.7 243.2 L1066.4 243.4 L1070.1 243.7 L1073.8 244.0 L1077.5 244.2 L1081.1 244.5 L1084.8 244.7 L1088.5 245.0 L1092.2 245.2 L1095.9 245.5 L1099.5 245.7 L1103.2 245.9 L1106.9 246.1 L1110.6 246.3 L1114.2 246.6 L1117.9 246.8 L1121.6 247.0 L1125.3 247.1 L1129.0 247.3 L1132.6 247.5 L1136.3 247.7 L1140.0 247.9 L1143.7 248.1 L1147.3 248.2 L1151.0 248.4 L1154.7 248.5 L1158.4 248.7 L1162.1 248.8 L1165.7 249.0 L1169.4 249.1 L1173.1 249.3 L1176.8 249.4 L1180.5 249.5 L1184.1 249.6 L1187.8 249.8 L1191.5 249.9 L1195.2 250.0 L1198.9 250.1 L1202.6 250.2 L1206.3 250.3 L1210.0 250.4 L1213.6 250.5 L1217.3 250.6 L1221.0 250.7 L1224.7 250.8 L1228.4 250.9 L1232.1 250.9 L1235.8 251.0 L1239.5 251.1 L1243.2 251.1 L1246.9 251.2 L1250.6 251.3 L1254.3 251.3 L1258.0 251.4 L1261.8 251.4 L1265.5 251.5 L1269.2 251.5 L1272.9 251.6 L1276.6 251.6 L1280.3 251.7 L1284.1 251.7 L1287.8 251.7 L1291.5 251.8 L1295.2 251.8 L1299.0 251.8 L1302.7 251.9 L1306.4 251.9 L1310.2 251.9 L1313.9 251.9 L1317.7 252.0 L1321.4 252.0 L1325.2 252.0 L1328.9 252.0 L1332.7 252.0 L1336.4 252.0 L1340.2 252.0 L1343.9 252.0 L1347.7 252.0 L1351.5 252.0 L1355.2 252.0 L1359.0 252.0 L1362.8 252.0 L1366.6 252.0 L1370.4 252.0 L1374.1 252.0 L1377.9 252.0 L1381.7 252.0 L1385.5 252.0 L1389.3 252.0 L1393.1 252.0 L1396.9 252.0 L1400.7 252.0 L1404.6 251.9 L1408.4 251.9 L1412.2 251.9 L1416.0 251.9 L1425.0 251.9" fill="none" stroke="#ffff14" stroke-width="2.8" stroke-linejoin="round"/>
<path d="M239.0 841.1 L241.9 835.9 L244.8 830.6 L246.6 827.3 L248.4 824.0 L250.2 820.6 L252.1 817.3 L253.9 814.0 L255.6 810.7 L257.4 807.3 L259.2 804.0 L261.0 800.7 L262.8 797.3 L264.5 794.0 L266.3 790.6 L268.1 787.3 L269.8 784.0 L271.6 780.6 L273.3 777.3 L275.1 773.9 L276.8 770.6 L278.6 767.2 L280.3 763.9 L282.0 760.5 L283.7 757.2 L285.5 753.8 L287.2 750.5 L288.9 747.1 L290.6 743.8 L292.3 740.4 L294.1 737.1 L295.8 733.7 L297.5 730.4 L299.2 727.0 L300.9 723.7 L302.6 720.3 L304.3 717.0 L306.0 713.6 L307.7 710.3 L309.4 706.9 L311.1 703.6 L312.8 700.3 L314.5 696.9 L316.2 693.6 L317.9 690.2 L319.6 686.9 L321.3 683.5 L323.0 680.2 L324.6 676.9 L326.3 673.5 L328.0 670.2 L329.7 666.9 L331.4 663.5 L333.1 660.2 L334.8 656.9 L336.5 653.6 L338.2 650.2 L339.9 646.9 L341.6 643.6 L343.4 640.3 L345.1 637.0 L346.8 633.7 L348.5 630.3 L350.2 627.0 L351.9 623.7 L353.7 620.4 L355.4 617.1 L357.1 613.8 L358.8 610.5 L360.6 607.3 L362.3 604.0 L364.0 600.7 L365.8 597.4 L367.5 594.1 L369.3 590.8 L371.1 587.6 L372.8 584.3 L374.6 581.0 L376.4 577.8 L378.1 574.5 L379.9 571.3 L381.7 568.0 L383.5 564.8 L385.3 561.6 L387.1 558.3 L388.9 555.1 L390.7 551.9 L392.5 548.6 L394.3 545.4 L396.2 542.2 L398.0 539.0 L399.9 535.8 L401.7 532.6 L403.6 529.4 L405.4 526.2 L407.3 523.0 L409.2 519.8 L411.1 516.7 L412.9 513.5 L414.8 510.3 L416.8 507.2 L418.7 504.0 L420.6 500.9 L422.5 497.7 L424.5 494.6 L426.4 491.5 L428.4 488.4 L430.3 485.2 L432.3 482.1 L434.3 479.0 L436.3 475.9 L438.3 472.8 L440.3 469.7 L442.3 466.7 L444.3 463.6 L446.4 460.5 L448.4 457.5 L450.5 454.4 L452.6 451.4 L454.7 448.3 L456.7 445.3 L458.8 442.3 L461.0 439.2 L463.1 436.2 L465.2 433.2 L467.4 430.2 L469.5 427.2 L471.7 424.3 L473.9 421.3 L476.1 418.3 L478.3 415.4 L480.5 412.4 L482.7 409.5 L485.0 406.5 L487.2 403.6 L489.5 400.7 L491.8 397.8 L494.1 394.9 L496.4 392.0 L498.7 389.1 L501.0 386.2 L503.4 383.4 L505.7 380.5 L508.1 377.7 L510.5 374.8 L512.9 372.0 L515.3 369.2 L517.7 366.4 L520.2 363.6 L522.6 360.8 L525.1 358.0 L527.6 355.2 L530.1 352.5 L532.6 349.7 L535.2 347.0 L537.7 344.3 L540.3 341.6 L542.9 338.9 L545.5 336.2 L548.1 333.5 L550.7 330.9 L553.3 328.2 L556.0 325.6 L558.7 323.0 L561.4 320.3 L564.1 317.7 L566.8 315.2 L569.5 312.6 L572.3 310.0 L575.1 307.5 L577.9 305.0 L580.7 302.5 L583.5 300.0 L586.4 297.5 L589.2 295.0 L592.1 292.6 L595.0 290.1 L597.9 287.7 L600.9 285.3 L603.8 283.0 L606.8 280.6 L609.8 278.3 L612.8 276.0 L615.8 273.7 L618.8 271.5 L621.9 269.3 L624.9 267.1 L628.0 265.0 L631.1 262.9 L634.2 260.8 L637.4 258.7 L640.5 256.7 L643.7 254.8 L646.9 252.8 L650.1 250.9 L653.3 249.1 L656.5 247.3 L659.8 245.5 L663.1 243.8 L666.3 242.1 L669.6 240.5 L672.9 238.9 L676.3 237.4 L679.6 235.9 L683.0 234.5 L686.4 233.1 L689.7 231.8 L693.2 230.6 L696.6 229.4 L700.0 228.2 L703.5 227.2 L706.9 226.1 L710.4 225.2 L713.9 224.3 L717.4 223.4 L721.0 222.7 L724.5 222.0 L728.1 221.3 L731.6 220.7 L735.2 220.2 L738.8 219.7 L742.4 219.3 L746.0 219.0 L749.7 218.6 L753.3 218.4 L757.0 218.2 L760.6 218.0 L764.3 217.9 L768.0 217.8 L771.7 217.8 L775.4 217.8 L779.1 217.8 L782.8 217.9 L786.5 218.0 L790.3 218.1 L794.0 218.3 L797.7 218.5 L801.5 218.8 L805.2 219.0 L809.0 219.3 L812.8 219.6 L816.5 220.0 L820.3 220.3 L824.1 220.7 L827.9 221.1 L831.7 221.5 L835.5 221.9 L839.2 222.3 L843.0 222.8 L846.8 223.2 L850.6 223.7 L854.4 224.1 L858.2 224.6 L862.0 225.1 L865.8 225.5 L869.6 226.0 L873.4 226.5 L877.2 227.0 L880.9 227.4 L884.7 227.9 L888.5 228.3 L892.3 228.8 L896.1 229.2 L899.8 229.6 L903.6 230.1 L907.4 230.5 L911.2 230.9 L914.9 231.3 L918.7 231.7 L922.5 232.1 L926.2 232.6 L930.0 232.9 L933.7 233.3 L937.5 233.7 L941.2 234.1 L945.0 234.5 L948.7 234.9 L952.5 235.2 L956.2 235.6 L960.0 236.0 L963.7 236.3 L967.5 236.7 L971.2 237.0 L975.0 237.4 L978.7 237.7 L982.4 238.0 L986.2 238.4 L989.9 238.7 L993.7 239.0 L997.4 239.3 L1001.1 239.7 L1004.8 240.0 L1008.6 240.3 L1012.3 240.6 L1016.0 240.9 L1019.8 241.2 L1023.5 241.4 L1027.2 241.7 L1030.9 242.0 L1034.7 242.3 L1038.4 242.6 L1042.1 242.8 L1045.8 243.1 L1049.5 243.3 L1053.3 243.6 L1057.0 243.9 L1060.7 244.1 L1064.4 244.3 L1068.1 244.6 L1071.9 244.8 L1075.6 245.1 L1079.3 245.3 L1083.0 245.5 L1086.7 245.7 L1090.4 245.9 L1094.1 246.2 L1097.9 246.4 L1101.6 246.6 L1105.3 246.8 L1109.0 247.0 L1112.7 247.2 L1116.4 247.4 L1120.1 247.5 L1123.8 247.7 L1127.6 247.9 L1131.3 248.1 L1135.0 248.3 L1138.7 248.4 L1142.4 248.6 L1146.1 248.7 L1149.8 248.9 L1153.5 249.1 L1157.3 249.2 L1161.0 249.4 L1164.7 249.5 L1168.4 249.6 L1172.1 249.8 L1175.8 249.9 L1179.5 250.0 L1183.3 250.2 L1187.0 250.3 L1190.7 250.4 L1194.4 250.5 L1198.1 250.7 L1201.8 250.8 L1205.6 250.9 L1209.3 251.0 L1213.0 251.1 L1216.7 251.2 L1220.4 251.3 L1224.2 251.4 L1227.9 251.5 L1231.6 251.5 L1235.3 251.6 L1239.1 251.7 L1242.8 251.8 L1246.5 251.9 L1250.2 251.9 L1254.0 252.0 L1257.7 252.1 L1261.4 252.1 L1265.2 252.2 L1268.9 252.2 L1272.6 252.3 L1276.4 252.3 L1280.1 252.4 L1283.8 252.4 L1287.6 252.5 L1291.3 252.5 L1295.1 252.5 L1298.8 252.6 L1302.6 252.6 L1306.3 252.6 L1310.1 252.7 L1313.8 252.7 L1317.6 252.7 L1321.3 252.7 L1325.1 252.7 L1328.8 252.7 L1332.6 252.8 L1336.3 252.8 L1340.1 252.8 L1343.9 252.8 L1347.6 252.8 L1351.4 252.8 L1355.2 252.8 L1358.9 252.7 L1362.7 252.7 L1366.5 252.7 L1370.3 252.7 L1374.0 252.7 L1377.8 252.7 L1381.6 252.6 L1385.4 252.6 L1389.2 252.6 L1393.0 252.6 L1396.8 252.5 L1400.6 252.5 L1404.4 252.5 L1408.2 252.4 L1412.0 252.4 L1415.8 252.3 L1425.0 252.3" fill="none" stroke="#ff1414" stroke-width="3.0" stroke-linejoin="round"/>
<path d="M175.1 839.8 L178.2 834.7 L181.3 829.6 L183.3 826.4 L185.2 823.2 L187.1 820.0 L189.0 816.8 L191.0 813.6 L192.9 810.4 L194.7 807.1 L196.6 803.9 L198.5 800.6 L200.4 797.3 L202.2 794.0 L204.1 790.7 L206.0 787.4 L207.8 784.1 L209.7 780.8 L211.5 777.5 L213.3 774.1 L215.2 770.8 L217.0 767.5 L218.8 764.1 L220.7 760.7 L222.5 757.4 L224.3 754.0 L226.1 750.6 L228.0 747.3 L229.8 743.9 L231.6 740.5 L233.4 737.1 L235.2 733.7 L237.1 730.3 L238.9 726.9 L240.7 723.5 L242.5 720.1 L244.4 716.8 L246.2 713.4 L248.0 710.0 L249.9 706.6 L251.7 703.2 L253.5 699.8 L255.4 696.4 L257.2 693.0 L259.1 689.6 L260.9 686.2 L262.8 682.9 L264.7 679.5 L266.6 676.1 L268.4 672.7 L270.3 669.4 L272.2 666.0 L274.1 662.7 L276.0 659.3 L278.0 656.0 L279.9 652.7 L281.8 649.3 L283.8 646.0 L285.7 642.7 L287.7 639.4 L289.7 636.1 L291.7 632.8 L293.7 629.6 L295.7 626.3 L297.7 623.1 L299.7 619.8 L301.8 616.6 L303.8 613.4 L305.9 610.2 L308.0 607.0 L310.1 603.8 L312.2 600.6 L314.3 597.5 L316.5 594.3 L318.6 591.2 L320.8 588.1 L323.0 585.0 L325.2 581.9 L327.4 578.8 L329.6 575.8 L331.9 572.7 L334.1 569.7 L336.4 566.7 L338.7 563.7 L341.0 560.7 L343.3 557.7 L345.6 554.8 L348.0 551.8 L350.3 548.9 L352.7 546.0 L355.1 543.0 L357.4 540.1 L359.8 537.2 L362.3 534.4 L364.7 531.5 L367.1 528.6 L369.6 525.8 L372.0 522.9 L374.5 520.1 L377.0 517.3 L379.4 514.4 L381.9 511.6 L384.5 508.8 L387.0 506.0 L389.5 503.3 L392.0 500.5 L394.6 497.7 L397.1 495.0 L399.7 492.2 L402.3 489.5 L404.8 486.7 L407.4 484.0 L410.0 481.3 L412.6 478.5 L415.2 475.8 L417.8 473.1 L420.5 470.4 L423.1 467.7 L425.7 465.0 L428.4 462.3 L431.0 459.7 L433.7 457.0 L436.3 454.3 L439.0 451.6 L441.7 449.0 L444.3 446.3 L447.0 443.6 L449.7 441.0 L452.4 438.3 L455.1 435.6 L457.8 433.0 L460.5 430.3 L463.2 427.7 L465.9 425.0 L468.6 422.4 L471.3 419.7 L474.0 417.1 L476.7 414.4 L479.4 411.8 L482.1 409.2 L484.9 406.5 L487.6 403.9 L490.3 401.2 L493.0 398.6 L495.8 395.9 L498.5 393.3 L501.2 390.6 L503.9 387.9 L506.7 385.3 L509.4 382.6 L512.1 380.0 L514.8 377.3 L517.5 374.6 L520.3 372.0 L523.0 369.3 L525.7 366.6 L528.5 364.0 L531.2 361.3 L533.9 358.6 L536.7 356.0 L539.4 353.3 L542.2 350.6 L544.9 348.0 L547.7 345.3 L550.4 342.7 L553.2 340.0 L556.0 337.4 L558.7 334.8 L561.5 332.2 L564.3 329.5 L567.1 326.9 L569.9 324.3 L572.8 321.7 L575.6 319.2 L578.4 316.6 L581.3 314.0 L584.1 311.5 L587.0 308.9 L589.9 306.4 L592.8 303.9 L595.7 301.4 L598.6 298.9 L601.5 296.5 L604.5 294.0 L607.4 291.6 L610.4 289.1 L613.4 286.7 L616.4 284.3 L619.4 282.0 L622.4 279.6 L625.5 277.3 L628.6 275.0 L631.6 272.7 L634.7 270.4 L637.8 268.2 L641.0 266.0 L644.1 263.8 L647.3 261.7 L650.4 259.6 L653.6 257.5 L656.8 255.5 L660.1 253.5 L663.3 251.5 L666.6 249.6 L669.9 247.7 L673.1 245.9 L676.5 244.1 L679.8 242.4 L683.1 240.7 L686.5 239.1 L689.9 237.6 L693.3 236.1 L696.7 234.6 L700.1 233.2 L703.6 231.9 L707.0 230.6 L710.5 229.4 L714.0 228.3 L717.5 227.2 L721.1 226.2 L724.6 225.3 L728.2 224.4 L731.8 223.6 L735.4 222.9 L739.0 222.3 L742.7 221.7 L746.3 221.2 L750.0 220.8 L753.7 220.4 L757.4 220.1 L761.1 219.9 L764.8 219.7 L768.6 219.6 L772.3 219.5 L776.1 219.4 L779.9 219.5 L783.7 219.5 L787.5 219.6 L791.3 219.8 L795.1 220.0 L798.9 220.2 L802.8 220.4 L806.6 220.7 L810.5 221.1 L814.3 221.4 L818.2 221.8 L822.1 222.2 L826.0 222.6 L829.8 223.1 L833.7 223.5 L837.6 224.0 L841.5 224.5 L845.4 225.0 L849.3 225.6 L853.2 226.1 L857.1 226.6 L861.0 227.2 L864.9 227.7 L868.8 228.2 L872.7 228.8 L876.6 229.3 L880.4 229.8 L884.3 230.3 L888.2 230.9 L892.1 231.4 L896.0 231.8 L899.8 232.3 L903.7 232.8 L907.6 233.3 L911.4 233.7 L915.3 234.2 L919.2 234.6 L923.0 235.0 L926.9 235.5 L930.7 235.9 L934.6 236.3 L938.4 236.7 L942.3 237.1 L946.1 237.5 L950.0 237.9 L953.8 238.2 L957.6 238.6 L961.5 239.0 L965.3 239.3 L969.1 239.7 L973.0 240.0 L976.8 240.3 L980.6 240.6 L984.4 241.0 L988.3 241.3 L992.1 241.6 L995.9 241.9 L999.7 242.2 L1003.5 242.4 L1007.3 242.7 L1011.2 243.0 L1015.0 243.2 L1018.8 243.5 L1022.6 243.8 L1026.4 244.0 L1030.2 244.2 L1034.0 244.5 L1037.8 244.7 L1041.6 244.9 L1045.4 245.2 L1049.2 245.4 L1053.0 245.6 L1056.8 245.8 L1060.6 246.0 L1064.4 246.2 L1068.2 246.3 L1072.0 246.5 L1075.8 246.7 L1079.5 246.9 L1083.3 247.0 L1087.1 247.2 L1090.9 247.4 L1094.7 247.5 L1098.5 247.7 L1102.3 247.8 L1106.1 248.0 L1109.9 248.1 L1113.6 248.2 L1117.4 248.3 L1121.2 248.5 L1125.0 248.6 L1128.8 248.7 L1132.6 248.8 L1136.4 248.9 L1140.2 249.0 L1143.9 249.1 L1147.7 249.2 L1151.5 249.3 L1155.3 249.4 L1159.1 249.5 L1162.9 249.6 L1166.7 249.7 L1170.5 249.8 L1174.2 249.8 L1178.0 249.9 L1181.8 250.0 L1185.6 250.1 L1189.4 250.1 L1193.2 250.2 L1197.0 250.2 L1200.8 250.3 L1204.6 250.4 L1208.4 250.4 L1212.2 250.5 L1216.0 250.5 L1219.8 250.6 L1223.6 250.6 L1227.4 250.7 L1231.2 250.7 L1235.0 250.7 L1238.8 250.8 L1242.6 250.8 L1246.4 250.8 L1250.2 250.9 L1254.0 250.9 L1257.8 251.0 L1261.6 251.0 L1265.4 251.0 L1269.2 251.0 L1273.1 251.1 L1276.9 251.1 L1280.7 251.1 L1284.5 251.2 L1288.3 251.2 L1292.2 251.2 L1296.0 251.2 L1299.8 251.3 L1303.7 251.3 L1307.5 251.3 L1311.3 251.3 L1315.2 251.4 L1319.0 251.4 L1322.8 251.4 L1326.7 251.4 L1330.5 251.5 L1334.4 251.5 L1338.2 251.5 L1342.1 251.5 L1346.0 251.6 L1349.8 251.6 L1353.7 251.6 L1357.5 251.7 L1361.4 251.7 L1365.3 251.7 L1369.1 251.8 L1373.0 251.8 L1376.9 251.8 L1380.8 251.9 L1384.7 251.9 L1388.6 251.9 L1392.4 252.0 L1396.3 252.0 L1400.2 252.1 L1404.1 252.1 L1408.0 252.2 L1411.9 252.2 L1415.9 252.3 L1425.0 252.3" fill="none" stroke="#18ff18" stroke-width="2.1" stroke-linejoin="round"/>
<path d="M179.9 841.0 L182.7 835.7 L185.5 830.4 L187.2 827.1 L188.9 823.8 L190.7 820.6 L192.4 817.3 L194.1 814.0 L195.8 810.7 L197.6 807.4 L199.3 804.1 L201.1 800.8 L202.8 797.5 L204.6 794.2 L206.3 790.8 L208.1 787.5 L209.9 784.2 L211.6 780.9 L213.4 777.6 L215.2 774.2 L217.0 770.9 L218.8 767.6 L220.6 764.3 L222.4 760.9 L224.2 757.6 L226.1 754.3 L227.9 751.0 L229.8 747.7 L231.6 744.4 L233.5 741.1 L235.4 737.7 L237.2 734.4 L239.1 731.1 L241.0 727.9 L242.9 724.6 L244.9 721.3 L246.8 718.0 L248.7 714.7 L250.7 711.5 L252.7 708.2 L254.6 705.0 L256.6 701.7 L258.6 698.5 L260.6 695.3 L262.7 692.0 L264.7 688.8 L266.7 685.6 L268.8 682.4 L270.9 679.3 L273.0 676.1 L275.1 672.9 L277.2 669.8 L279.3 666.6 L281.5 663.5 L283.6 660.4 L285.8 657.3 L288.0 654.2 L290.2 651.2 L292.4 648.1 L294.7 645.1 L296.9 642.0 L299.2 639.0 L301.5 636.0 L303.8 633.0 L306.1 630.1 L308.5 627.1 L310.8 624.2 L313.2 621.3 L315.6 618.4 L318.0 615.5 L320.5 612.6 L322.9 609.8 L325.4 607.0 L327.9 604.1 L330.4 601.3 L332.9 598.6 L335.4 595.8 L337.9 593.0 L340.5 590.3 L343.1 587.6 L345.7 584.8 L348.3 582.1 L350.9 579.5 L353.5 576.8 L356.2 574.1 L358.8 571.5 L361.5 568.8 L364.2 566.2 L366.9 563.6 L369.6 561.0 L372.3 558.4 L375.0 555.8 L377.7 553.2 L380.5 550.7 L383.2 548.1 L386.0 545.6 L388.8 543.0 L391.6 540.5 L394.4 538.0 L397.2 535.5 L400.0 532.9 L402.8 530.4 L405.6 528.0 L408.4 525.5 L411.3 523.0 L414.1 520.5 L417.0 518.0 L419.8 515.6 L422.7 513.1 L425.5 510.7 L428.4 508.2 L431.3 505.8 L434.2 503.3 L437.1 500.9 L439.9 498.4 L442.8 496.0 L445.7 493.6 L448.6 491.1 L451.5 488.7 L454.4 486.3 L457.3 483.9 L460.2 481.4 L463.1 479.0 L466.0 476.6 L469.0 474.1 L471.9 471.7 L474.8 469.3 L477.7 466.9 L480.6 464.4 L483.5 462.0 L486.4 459.6 L489.3 457.1 L492.2 454.7 L495.1 452.2 L498.0 449.8 L500.9 447.4 L503.8 444.9 L506.6 442.4 L509.5 440.0 L512.4 437.5 L515.3 435.0 L518.1 432.6 L521.0 430.1 L523.8 427.6 L526.7 425.1 L529.5 422.6 L532.4 420.1 L535.2 417.6 L538.0 415.0 L540.8 412.5 L543.6 409.9 L546.4 407.4 L549.2 404.8 L552.0 402.3 L554.8 399.7 L557.6 397.1 L560.3 394.5 L563.1 391.9 L565.8 389.3 L568.5 386.6 L571.2 384.0 L573.9 381.3 L576.6 378.7 L579.3 376.0 L582.0 373.3 L584.6 370.6 L587.3 367.9 L589.9 365.2 L592.6 362.5 L595.2 359.7 L597.8 357.0 L600.4 354.3 L603.1 351.6 L605.7 348.8 L608.3 346.1 L610.9 343.4 L613.5 340.7 L616.2 338.0 L618.8 335.3 L621.4 332.6 L624.1 330.0 L626.7 327.3 L629.3 324.6 L632.0 322.0 L634.7 319.4 L637.3 316.8 L640.0 314.2 L642.7 311.7 L645.4 309.1 L648.1 306.6 L650.9 304.1 L653.6 301.6 L656.4 299.2 L659.2 296.8 L662.0 294.4 L664.8 292.0 L667.6 289.7 L670.5 287.4 L673.4 285.2 L676.3 282.9 L679.2 280.8 L682.2 278.6 L685.1 276.5 L688.1 274.4 L691.2 272.4 L694.2 270.4 L697.3 268.5 L700.4 266.6 L703.5 264.7 L706.5 262.8 L709.5 260.8 L712.4 258.8 L715.2 256.8 L718.1 254.8 L720.9 252.7 L723.6 250.6 L726.4 248.5 L729.2 246.5 L732.0 244.5 L735.0 242.6 L738.1 240.8 L741.3 239.2 L744.6 237.6 L748.0 236.2 L751.4 234.8 L754.9 233.5 L758.4 232.3 L761.9 231.1 L765.5 230.0 L769.0 229.0 L772.6 228.0 L776.2 227.1 L779.8 226.3 L783.3 225.5 L786.9 224.7 L790.6 224.0 L794.2 223.4 L797.8 222.8 L801.4 222.3 L805.1 221.9 L808.7 221.4 L812.4 221.1 L816.0 220.7 L819.7 220.4 L823.4 220.2 L827.0 220.0 L830.7 219.9 L834.4 219.7 L838.1 219.7 L841.8 219.6 L845.5 219.6 L849.3 219.7 L853.0 219.8 L856.7 219.9 L860.4 220.0 L864.2 220.2 L867.9 220.4 L871.7 220.6 L875.4 220.8 L879.2 221.1 L882.9 221.4 L886.7 221.8 L890.5 222.1 L894.2 222.5 L898.0 222.9 L901.8 223.3 L905.6 223.7 L909.3 224.2 L913.1 224.6 L916.9 225.1 L920.7 225.6 L924.5 226.1 L928.3 226.6 L932.1 227.2 L935.9 227.7 L939.7 228.2 L943.5 228.8 L947.3 229.3 L951.1 229.9 L954.9 230.4 L958.7 231.0 L962.5 231.5 L966.3 232.1 L970.1 232.6 L973.9 233.2 L977.7 233.7 L981.5 234.3 L985.3 234.8 L989.1 235.3 L992.9 235.8 L996.7 236.3 L1000.5 236.8 L1004.3 237.3 L1008.1 237.7 L1011.8 238.2 L1015.6 238.6 L1019.4 239.0 L1023.2 239.4 L1027.0 239.8 L1030.8 240.2 L1034.6 240.6 L1038.3 240.9 L1042.1 241.3 L1045.9 241.6 L1049.7 241.9 L1053.4 242.2 L1057.2 242.6 L1061.0 242.8 L1064.8 243.1 L1068.5 243.4 L1072.3 243.7 L1076.1 243.9 L1079.8 244.2 L1083.6 244.4 L1087.4 244.6 L1091.1 244.8 L1094.9 245.0 L1098.7 245.2 L1102.4 245.4 L1106.2 245.6 L1109.9 245.8 L1113.7 245.9 L1117.5 246.1 L1121.2 246.2 L1125.0 246.4 L1128.7 246.5 L1132.5 246.6 L1136.2 246.8 L1140.0 246.9 L1143.8 247.0 L1147.5 247.1 L1151.3 247.2 L1155.0 247.3 L1158.8 247.4 L1162.5 247.5 L1166.3 247.5 L1170.0 247.6 L1173.8 247.7 L1177.6 247.7 L1181.3 247.8 L1185.1 247.9 L1188.8 247.9 L1192.6 247.9 L1196.3 248.0 L1200.1 248.0 L1203.8 248.1 L1207.6 248.1 L1211.4 248.1 L1215.1 248.2 L1218.9 248.2 L1222.6 248.2 L1226.4 248.2 L1230.1 248.3 L1233.9 248.3 L1237.7 248.3 L1241.4 248.3 L1245.2 248.3 L1248.9 248.4 L1252.7 248.4 L1256.5 248.4 L1260.2 248.4 L1264.0 248.4 L1267.8 248.4 L1271.5 248.4 L1275.3 248.5 L1279.1 248.5 L1282.8 248.5 L1286.6 248.5 L1290.4 248.5 L1294.1 248.6 L1297.9 248.6 L1301.7 248.6 L1305.5 248.7 L1309.2 248.7 L1313.0 248.7 L1316.8 248.8 L1320.6 248.8 L1324.4 248.8 L1328.2 248.9 L1331.9 248.9 L1335.7 249.0 L1339.5 249.1 L1343.3 249.1 L1347.1 249.2 L1350.9 249.3 L1354.7 249.3 L1358.5 249.4 L1362.3 249.5 L1366.1 249.6 L1369.9 249.7 L1373.7 249.8 L1377.5 249.9 L1381.3 250.0 L1385.1 250.2 L1388.9 250.3 L1392.7 250.4 L1396.5 250.6 L1400.4 250.7 L1404.2 250.9 L1408.0 251.1 L1411.8 251.2 L1415.7 251.4 L1425.0 251.5" fill="none" stroke="#f814f8" stroke-width="2.1" stroke-linejoin="round"/>
</svg>
</div>
<div class="a" style="left:27px;top:831px;width:1391px;height:9px;background:#ebebeb;border-top:1px solid #fff;overflow:hidden">
<div class="a" style="left:74px;top:1px;width:1px;height:8px;background:#8a8a8a"></div>
<div class="a" style="left:149px;top:1px;width:1px;height:8px;background:#8a8a8a"></div>
<div class="a" style="left:152px;top:2px;width:1300px;height:8px;border-left:1px solid #8a8a8a;border-top:1px solid #8a8a8a"></div>
<div class="t" style="left:3px;top:4px;font-size:11px;color:#222">40,00 Hz</div>
<div class="t" style="left:85px;top:4px;font-size:11px;color:#222">5,0 dB</div>
<div class="t" style="left:154px;top:4px;font-size:11px;color:#222">Hold left mouse button to zoom the graph</div>
</div>
<div class="a" style="left:0;top:839px;width:1418px;height:5px;background:#eeeeee"></div>
<div class="a" style="left:27px;top:839px;width:1391px;height:1px;background:#9a9a9a"></div>
<div class="a" style="left:17px;top:840px;width:1360px;height:4px;background:#f8f8f8;border-top:1px solid #a8a8a8;border-left:1px solid #a8a8a8;border-right:1px solid #a8a8a8"></div>
<div class="a" style="left:1418px;top:58px;width:18px;height:786px;background:linear-gradient(90deg,#e4e4e4,#f4f4f4 30%,#f0f0f0);border-left:1px solid #e8e8e8"></div>
<svg class="a" style="left:1422px;top:63px" width="10" height="8"><path d="M1 6 L5 2 L9 6 Z" fill="#404040"/></svg>
<svg class="a" style="left:1422px;top:826px" width="10" height="8"><path d="M1 2 L5 6 L9 2 Z" fill="#404040"/></svg>
<div class="a" style="left:1419px;top:76px;width:15px;height:722px;border:1px solid #9c9c9c;border-radius:2px;background:linear-gradient(90deg,#f4f4f4,#e8e8e8 50%,#d4d4d4)"></div>
<div class="a" style="left:1423px;top:432px;width:7px;height:1px;background:#555;box-shadow:0 2px 0 #555,0 4px 0 #555,0 6px 0 #555"></div>
<div class="a" style="left:419px;top:578px;width:308px;height:228px;border-radius:6px 6px 0 0;background:#dbe6f1;border:1px solid #505a64;box-shadow:inset 1px 1px 0 #f6f9fc,inset -1px -1px 0 #f6f9fc;overflow:hidden">
<div class="a" style="left:0;top:0;width:306px;height:24px;background:linear-gradient(#c1cfdf,#d6e2ef);border-radius:5px 5px 0 0;box-shadow:inset 1px 1px 0 #f2f6fa"></div>
<svg class="a" style="left:5px;top:6px" width="15" height="15" viewBox="0 0 15 15"><path d="M9.6 2.6 L10.6 6.2 L5 8.6 L2.2 12.8" fill="none" stroke="#000" stroke-width="2.5" stroke-linecap="round" stroke-linejoin="round"/><circle cx="10.2" cy="3.2" r="2" fill="#000"/><circle cx="2.6" cy="12.6" r="1.7" fill="#000"/></svg>
<div class="t" style="left:25px;top:7px;font-size:11.25px;letter-spacing:0.12px;color:#434f62">[6]vented : EMINENCE BETA - 12</div>
<div class="a" style="left:205px;top:4px;width:31px;height:17px;border:1px solid #7d8ea4;border-radius:3px;background:linear-gradient(#c6d3e2,#dbe5f0);"><div class="a" style="left:9.5px;top:6px;width:11px;height:5px;border:1px solid #3c4450;border-radius:2px;background:#f8f8f8"></div></div>
<div class="a" style="left:238px;top:4px;width:31px;height:17px;border:1px solid #7d8ea4;border-radius:3px;background:linear-gradient(#c6d3e2,#dbe5f0);"><div class="a" style="left:9.5px;top:2.5px;width:11px;height:9px;border:1.5px solid #3c4450;border-radius:1px;background:#e8eef6"><div class="a" style="left:2px;top:2px;width:4px;height:2px;border:1px solid #3c4450"></div></div></div>
<div class="a" style="left:271px;top:4px;width:31px;height:17px;border:1px solid #7d8ea4;border-radius:3px;background:linear-gradient(#c6d3e2,#dbe5f0);"><svg class="a" style="left:8.5px;top:1.5px" width="14" height="11" viewBox="0 0 14 11"><path d="M3.5 2.5 L10.5 8.5 M10.5 2.5 L3.5 8.5" stroke="#3c4450" stroke-width="3.6" stroke-linecap="round"/><path d="M3.5 2.5 L10.5 8.5 M10.5 2.5 L3.5 8.5" stroke="#fafafa" stroke-width="1.7" stroke-linecap="round"/></svg></div>
<div class="a cl" style="left:4px;top:24px;width:298px;height:200px;background:#f0f0f0;border-top:1px solid #f8fafc">
<div class="a" style="left:0px;top:19px;width:300px;height:168px;border-top:1px solid #fff;border-left:1px solid #fff;border-right:1px solid #6e6e6e;border-bottom:1px solid #a0a0a0"></div>
<div class="a" style="left:1px;top:2px;width:40px;height:17px;background:#f0f0f0;border-top:1px solid #fff;border-left:1px solid #fff;border-right:2px solid #777;border-radius:2px 2px 0 0"></div>
<div class="t" style="left:6.5px;top:5.700000000000003px;font-size:11px;letter-spacing:-0.2px">Driver</div>
<div class="a" style="left:86px;top:2px;width:40px;height:17px;background:#f0f0f0;border-top:1px solid #fff;border-left:1px solid #fff;border-right:2px solid #777;border-radius:2px 2px 0 0"></div>
<div class="t" style="left:90px;top:5.700000000000003px;font-size:11px;letter-spacing:-0.2px">Vents</div>
<div class="a" style="left:126px;top:2px;width:42px;height:17px;background:#f0f0f0;border-top:1px solid #fff;border-left:1px solid #fff;border-right:2px solid #777;border-radius:2px 2px 0 0"></div>
<div class="t" style="left:132.5px;top:5.700000000000003px;font-size:11px;letter-spacing:-0.2px">Plot</div>
<div class="a" style="left:168px;top:2px;width:45px;height:17px;background:#f0f0f0;border-top:1px solid #fff;border-left:1px solid #fff;border-right:2px solid #777;border-radius:2px 2px 0 0"></div>
<div class="t" style="left:174.5px;top:5.700000000000003px;font-size:11px;letter-spacing:-0.2px">Project</div>
<div class="a" style="left:39px;top:0px;width:47px;height:20px;background:#f0f0f0;border-top:1px solid #fff;border-left:1px solid #fff;border-right:2px solid #777;border-radius:2px 2px 0 0"></div>
<div class="t" style="left:48.5px;top:3.6000000000000014px;font-size:11px;letter-spacing:-0.2px">Box</div>
<div class="a" style="left:6.5px;top:27px;width:175px;height:16px;border:1px solid #a0a0a0;border-right-color:#e8e8e8;border-bottom-color:#d8d8d8;background:#f0f0f0"></div>
<div class="t" style="left:8.5px;top:30.299999999999997px;font-size:11px;letter-spacing:-0.2px">vented</div>
<div class="a" style="left:186.5px;top:27px;width:71px;height:17px;border:1px solid #fff;border-right:2px solid #6a6a6a;border-bottom:2px solid #6a6a6a;background:#f0f0f0;text-align:center;font-size:11px;letter-spacing:-0.2px;line-height:14px">Box shape</div>
<div class="a" style="left:6.5px;top:52.5px;width:83px;height:94px;border:1px solid #a0a0a0;box-shadow:inset 1px 1px 0 #fff, 1px 1px 0 #fff"></div>
<div class="t" style="left:13px;top:48.5px;font-size:11px;letter-spacing:-0.2px;background:#f0f0f0;padding:0 1px">Front chamber:</div>
<div class="t" style="left:14px;top:64.5px;font-size:11px;letter-spacing:-0.2px;color:#000080">Volume:</div>
<div class="a" style="left:14.3px;top:79.3px;width:51px;height:19.5px;border-top:2px solid #6e6e6e;border-left:2px solid #6e6e6e;border-right:1px solid #f8f8f8;border-bottom:1px solid #f8f8f8;background:#fff;font-size:11px;letter-spacing:-0.2px;padding:2px 0 0 1.5px;line-height:13px">80</div>
<div class="a" style="left:72.5px;top:91.5px;width:1.5px;height:5.5px;background:#000"></div>
<div class="t" style="left:14px;top:104.5px;font-size:11px;letter-spacing:-0.2px;color:#000080">Tuning freq.:</div>
<div class="a" style="left:14.3px;top:119.5px;width:51px;height:19.5px;border-top:2px solid #6e6e6e;border-left:2px solid #6e6e6e;border-right:1px solid #f8f8f8;border-bottom:1px solid #f8f8f8;background:#fff;font-size:11px;letter-spacing:-0.2px;padding:2px 0 0 1.5px;line-height:13px">50,00</div>
<div class="t" style="left:72.5px;top:130.5px;font-size:7.5px;font-weight:bold;letter-spacing:-0.2px">Hz</div>
<div class="t" style="left:10.5px;top:156.5px;font-size:11px;letter-spacing:-0.2px">Ql = 7,00</div>
<svg class="a" style="left:186.5px;top:51px" width="73" height="97" viewBox="0 0 73 97">
<rect x="1.2" y="1.2" width="68.8" height="93.6" fill="#fff" stroke="#000" stroke-width="2.4"/>
<rect x="50.3" y="21.2" width="7" height="31" rx="2.5" fill="#000"/>
<path d="M56 27 L65 16.5 Q68 14 70.5 14.5 V58.5 Q68 59 65 56.5 L56 46.5 Z" fill="#000"/>
<circle cx="64.6" cy="24.4" r="0.9" fill="#ccc"/><circle cx="64.6" cy="36.2" r="0.9" fill="#ccc"/><circle cx="64.6" cy="48" r="0.9" fill="#ccc"/>
<path d="M33 70 H69.5 M33 85.6 H69.5" stroke="#000" stroke-width="2"/>
</svg>
<div class="a" style="left:-1px;top:186.5px;width:300px;height:1.5px;background:#5a5a5a"></div>
<div class="a" style="left:0px;top:188px;width:62px;height:11px;background:#f4f4f4;border-left:1px solid #fff;border-bottom:1px solid #8a8a8a"></div>
<div class="t" style="left:11px;top:190.5px;font-family:'Liberation Serif',serif;font-weight:bold;font-size:8px;letter-spacing:0.1px">Parameters</div>
<div class="a" style="left:63px;top:188.8px;width:236px;height:10px;background:#ff00ff"></div>
</div>
</div>
<div class="a" style="left:1059px;top:498px;width:308px;height:228px;border-radius:6px 6px 0 0;background:#dbe6f1;border:1px solid #505a64;box-shadow:inset 1px 1px 0 #f6f9fc,inset -1px -1px 0 #f6f9fc;overflow:hidden">
<div class="a" style="left:0;top:0;width:306px;height:24px;background:linear-gradient(#c1cfdf,#d6e2ef);border-radius:5px 5px 0 0;box-shadow:inset 1px 1px 0 #f2f6fa"></div>
<svg class="a" style="left:5px;top:6px" width="15" height="15" viewBox="0 0 15 15"><path d="M9.6 2.6 L10.6 6.2 L5 8.6 L2.2 12.8" fill="none" stroke="#000" stroke-width="2.5" stroke-linecap="round" stroke-linejoin="round"/><circle cx="10.2" cy="3.2" r="2" fill="#000"/><circle cx="2.6" cy="12.6" r="1.7" fill="#000"/></svg>
<div class="t" style="left:25px;top:7px;font-size:11.25px;letter-spacing:0.12px;color:#434f62">[4]vented : Eminence OEM 1214...</div>
<div class="a" style="left:205px;top:4px;width:31px;height:17px;border:1px solid #7d8ea4;border-radius:3px;background:linear-gradient(#c6d3e2,#dbe5f0);"><div class="a" style="left:9.5px;top:6px;width:11px;height:5px;border:1px solid #3c4450;border-radius:2px;background:#f8f8f8"></div></div>
<div class="a" style="left:238px;top:4px;width:31px;height:17px;border:1px solid #7d8ea4;border-radius:3px;background:linear-gradient(#c6d3e2,#dbe5f0);"><div class="a" style="left:9.5px;top:2.5px;width:11px;height:9px;border:1.5px solid #3c4450;border-radius:1px;background:#e8eef6"><div class="a" style="left:2px;top:2px;width:4px;height:2px;border:1px solid #3c4450"></div></div></div>
<div class="a" style="left:271px;top:4px;width:31px;height:17px;border:1px solid #7d8ea4;border-radius:3px;background:linear-gradient(#c6d3e2,#dbe5f0);"><svg class="a" style="left:8.5px;top:1.5px" width="14" height="11" viewBox="0 0 14 11"><path d="M3.5 2.5 L10.5 8.5 M10.5 2.5 L3.5 8.5" stroke="#3c4450" stroke-width="3.6" stroke-linecap="round"/><path d="M3.5 2.5 L10.5 8.5 M10.5 2.5 L3.5 8.5" stroke="#fafafa" stroke-width="1.7" stroke-linecap="round"/></svg></div>
<div class="a cl" style="left:4px;top:24px;width:298px;height:200px;background:#f0f0f0;border-top:1px solid #f8fafc">
<div class="a" style="left:0px;top:19px;width:300px;height:168px;border-top:1px solid #fff;border-left:1px solid #fff;border-right:1px solid #6e6e6e;border-bottom:1px solid #a0a0a0"></div>
<div class="a" style="left:1px;top:2px;width:40px;height:17px;background:#f0f0f0;border-top:1px solid #fff;border-left:1px solid #fff;border-right:2px solid #777;border-radius:2px 2px 0 0"></div>
<div class="t" style="left:6.5px;top:5.700000000000003px;font-size:11px;letter-spacing:-0.2px">Driver</div>
<div class="a" style="left:86px;top:2px;width:40px;height:17px;background:#f0f0f0;border-top:1px solid #fff;border-left:1px solid #fff;border-right:2px solid #777;border-radius:2px 2px 0 0"></div>
<div class="t" style="left:90px;top:5.700000000000003px;font-size:11px;letter-spacing:-0.2px">Vents</div>
<div class="a" style="left:126px;top:2px;width:42px;height:17px;background:#f0f0f0;border-top:1px solid #fff;border-left:1px solid #fff;border-right:2px solid #777;border-radius:2px 2px 0 0"></div>
<div class="t" style="left:132.5px;top:5.700000000000003px;font-size:11px;letter-spacing:-0.2px">Plot</div>
<div class="a" style="left:168px;top:2px;width:45px;height:17px;background:#f0f0f0;border-top:1px solid #fff;border-left:1px solid #fff;border-right:2px solid #777;border-radius:2px 2px 0 0"></div>
<div class="t" style="left:174.5px;top:5.700000000000003px;font-size:11px;letter-spacing:-0.2px">Project</div>
<div class="a" style="left:39px;top:0px;width:47px;height:20px;background:#f0f0f0;border-top:1px solid #fff;border-left:1px solid #fff;border-right:2px solid #777;border-radius:2px 2px 0 0"></div>
<div class="t" style="left:48.5px;top:3.6000000000000014px;font-size:11px;letter-spacing:-0.2px">Box</div>
<div class="a" style="left:6.5px;top:27px;width:175px;height:16px;border:1px solid #a0a0a0;border-right-color:#e8e8e8;border-bottom-color:#d8d8d8;background:#f0f0f0"></div>
<div class="t" style="left:8.5px;top:30.299999999999997px;font-size:11px;letter-spacing:-0.2px">vented</div>
<div class="a" style="left:186.5px;top:27px;width:71px;height:17px;border:1px solid #fff;border-right:2px solid #6a6a6a;border-bottom:2px solid #6a6a6a;background:#f0f0f0;text-align:center;font-size:11px;letter-spacing:-0.2px;line-height:14px">Box shape</div>
<div class="a" style="left:6.5px;top:52.5px;width:83px;height:94px;border:1px solid #a0a0a0;box-shadow:inset 1px 1px 0 #fff, 1px 1px 0 #fff"></div>
<div class="t" style="left:13px;top:48.5px;font-size:11px;letter-spacing:-0.2px;background:#f0f0f0;padding:0 1px">Front chamber:</div>
<div class="t" style="left:14px;top:64.5px;font-size:11px;letter-spacing:-0.2px;color:#000080">Volume:</div>
<div class="a" style="left:14.3px;top:79.3px;width:51px;height:19.5px;border-top:2px solid #6e6e6e;border-left:2px solid #6e6e6e;border-right:1px solid #f8f8f8;border-bottom:1px solid #f8f8f8;background:#fff;font-size:11px;letter-spacing:-0.2px;padding:2px 0 0 1.5px;line-height:13px">140,0</div>
<div class="a" style="left:72.5px;top:91.5px;width:1.5px;height:5.5px;background:#000"></div>
<div class="t" style="left:14px;top:104.5px;font-size:11px;letter-spacing:-0.2px;color:#000080">Tuning freq.:</div>
<div class="a" style="left:14.3px;top:119.5px;width:51px;height:19.5px;border-top:2px solid #6e6e6e;border-left:2px solid #6e6e6e;border-right:1px solid #f8f8f8;border-bottom:1px solid #f8f8f8;background:#fff;font-size:11px;letter-spacing:-0.2px;padding:2px 0 0 1.5px;line-height:13px">60,00</div>
<div class="t" style="left:72.5px;top:130.5px;font-size:7.5px;font-weight:bold;letter-spacing:-0.2px">Hz</div>
<div class="t" style="left:10.5px;top:156.5px;font-size:11px;letter-spacing:-0.2px">Ql = 7,00</div>
<svg class="a" style="left:186.5px;top:51px" width="73" height="97" viewBox="0 0 73 97">
<rect x="1.2" y="1.2" width="68.8" height="93.6" fill="#fff" stroke="#000" stroke-width="2.4"/>
<rect x="50.3" y="21.2" width="7" height="31" rx="2.5" fill="#000"/>
<path d="M56 27 L65 16.5 Q68 14 70.5 14.5 V58.5 Q68 59 65 56.5 L56 46.5 Z" fill="#000"/>
<circle cx="64.6" cy="24.4" r="0.9" fill="#ccc"/><circle cx="64.6" cy="36.2" r="0.9" fill="#ccc"/><circle cx="64.6" cy="48" r="0.9" fill="#ccc"/>
<path d="M33 70 H69.5 M33 85.6 H69.5" stroke="#000" stroke-width="2"/>
</svg>
<div class="a" style="left:-1px;top:186.5px;width:300px;height:1.5px;background:#5a5a5a"></div>
<div class="a" style="left:0px;top:188px;width:62px;height:11px;background:#f4f4f4;border-left:1px solid #fff;border-bottom:1px solid #8a8a8a"></div>
<div class="t" style="left:11px;top:190.5px;font-family:'Liberation Serif',serif;font-weight:bold;font-size:8px;letter-spacing:0.1px">Parameters</div>
<div class="a" style="left:63px;top:188.8px;width:236px;height:10px;background:#ff0000"></div>
</div>
</div>
<div class="a" style="left:739px;top:378px;width:308px;height:354px;border-radius:6px 6px 0 0;background:#dbe6f1;border:1px solid #505a64;box-shadow:inset 1px 1px 0 #f6f9fc,inset -1px -1px 0 #f6f9fc;overflow:hidden">
<div class="a" style="left:0;top:0;width:306px;height:24px;background:linear-gradient(#c1cfdf,#d6e2ef);border-radius:5px 5px 0 0;box-shadow:inset 1px 1px 0 #f2f6fa"></div>
<svg class="a" style="left:5px;top:6px" width="15" height="15" viewBox="0 0 15 15"><path d="M9.6 2.6 L10.6 6.2 L5 8.6 L2.2 12.8" fill="none" stroke="#000" stroke-width="2.5" stroke-linecap="round" stroke-linejoin="round"/><circle cx="10.2" cy="3.2" r="2" fill="#000"/><circle cx="2.6" cy="12.6" r="1.7" fill="#000"/></svg>
<div class="t" style="left:25px;top:7px;font-size:11.25px;letter-spacing:0.12px;color:#434f62">[5]vented : Eminence S2012-Bas...</div>
<div class="a" style="left:205px;top:4px;width:31px;height:17px;border:1px solid #7d8ea4;border-radius:3px;background:linear-gradient(#c6d3e2,#dbe5f0);"><div class="a" style="left:9.5px;top:6px;width:11px;height:5px;border:1px solid #3c4450;border-radius:2px;background:#f8f8f8"></div></div>
<div class="a" style="left:238px;top:4px;width:31px;height:17px;border:1px solid #7d8ea4;border-radius:3px;background:linear-gradient(#c6d3e2,#dbe5f0);"><div class="a" style="left:9.5px;top:2.5px;width:11px;height:9px;border:1.5px solid #3c4450;border-radius:1px;background:#e8eef6"><div class="a" style="left:2px;top:2px;width:4px;height:2px;border:1px solid #3c4450"></div></div></div>
<div class="a" style="left:271px;top:4px;width:31px;height:17px;border:1px solid #7d8ea4;border-radius:3px;background:linear-gradient(#c6d3e2,#dbe5f0);"><svg class="a" style="left:8.5px;top:1.5px" width="14" height="11" viewBox="0 0 14 11"><path d="M3.5 2.5 L10.5 8.5 M10.5 2.5 L3.5 8.5" stroke="#3c4450" stroke-width="3.6" stroke-linecap="round"/><path d="M3.5 2.5 L10.5 8.5 M10.5 2.5 L3.5 8.5" stroke="#fafafa" stroke-width="1.7" stroke-linecap="round"/></svg></div>
<div class="a cl" style="left:4px;top:24px;width:298px;height:326px;background:#f0f0f0;border-top:1px solid #f8fafc">
<div class="a" style="left:0px;top:19px;width:300px;height:168px;border-top:1px solid #fff;border-left:1px solid #fff;border-right:1px solid #6e6e6e;border-bottom:1px solid #a0a0a0"></div>
<div class="a" style="left:1px;top:2px;width:40px;height:17px;background:#f0f0f0;border-top:1px solid #fff;border-left:1px solid #fff;border-right:2px solid #777;border-radius:2px 2px 0 0"></div>
<div class="t" style="left:6.5px;top:5.700000000000003px;font-size:11px;letter-spacing:-0.2px">Driver</div>
<div class="a" style="left:86px;top:2px;width:40px;height:17px;background:#f0f0f0;border-top:1px solid #fff;border-left:1px solid #fff;border-right:2px solid #777;border-radius:2px 2px 0 0"></div>
<div class="t" style="left:90px;top:5.700000000000003px;font-size:11px;letter-spacing:-0.2px">Vents</div>
<div class="a" style="left:126px;top:2px;width:42px;height:17px;background:#f0f0f0;border-top:1px solid #fff;border-left:1px solid #fff;border-right:2px solid #777;border-radius:2px 2px 0 0"></div>
<div class="t" style="left:132.5px;top:5.700000000000003px;font-size:11px;letter-spacing:-0.2px">Plot</div>
<div class="a" style="left:168px;top:2px;width:45px;height:17px;background:#f0f0f0;border-top:1px solid #fff;border-left:1px solid #fff;border-right:2px solid #777;border-radius:2px 2px 0 0"></div>
<div class="t" style="left:174.5px;top:5.700000000000003px;font-size:11px;letter-spacing:-0.2px">Project</div>
<div class="a" style="left:39px;top:0px;width:47px;height:20px;background:#f0f0f0;border-top:1px solid #fff;border-left:1px solid #fff;border-right:2px solid #777;border-radius:2px 2px 0 0"></div>
<div class="t" style="left:48.5px;top:3.6000000000000014px;font-size:11px;letter-spacing:-0.2px">Box</div>
<div class="a" style="left:6.5px;top:27px;width:175px;height:16px;border:1px solid #a0a0a0;border-right-color:#e8e8e8;border-bottom-color:#d8d8d8;background:#f0f0f0"></div>
<div class="t" style="left:8.5px;top:30.299999999999997px;font-size:11px;letter-spacing:-0.2px">vented</div>
<div class="a" style="left:186.5px;top:27px;width:71px;height:17px;border:1px solid #fff;border-right:2px solid #6a6a6a;border-bottom:2px solid #6a6a6a;background:#f0f0f0;text-align:center;font-size:11px;letter-spacing:-0.2px;line-height:14px">Box shape</div>
<div class="a" style="left:6.5px;top:52.5px;width:83px;height:94px;border:1px solid #a0a0a0;box-shadow:inset 1px 1px 0 #fff, 1px 1px 0 #fff"></div>
<div class="t" style="left:13px;top:48.5px;font-size:11px;letter-spacing:-0.2px;background:#f0f0f0;padding:0 1px">Front chamber:</div>
<div class="t" style="left:14px;top:64.5px;font-size:11px;letter-spacing:-0.2px;color:#000080">Volume:</div>
<div class="a" style="left:14.3px;top:79.3px;width:51px;height:19.5px;border-top:2px solid #6e6e6e;border-left:2px solid #6e6e6e;border-right:1px solid #f8f8f8;border-bottom:1px solid #f8f8f8;background:#fff;font-size:11px;letter-spacing:-0.2px;padding:2px 0 0 1.5px;line-height:13px">80</div>
<div class="a" style="left:72.5px;top:91.5px;width:1.5px;height:5.5px;background:#000"></div>
<div class="t" style="left:14px;top:104.5px;font-size:11px;letter-spacing:-0.2px;color:#000080">Tuning freq.:</div>
<div class="a" style="left:14.3px;top:119.5px;width:51px;height:19.5px;border-top:2px solid #6e6e6e;border-left:2px solid #6e6e6e;border-right:1px solid #f8f8f8;border-bottom:1px solid #f8f8f8;background:#fff;font-size:11px;letter-spacing:-0.2px;padding:2px 0 0 1.5px;line-height:13px">50</div>
<div class="t" style="left:72.5px;top:130.5px;font-size:7.5px;font-weight:bold;letter-spacing:-0.2px">Hz</div>
<div class="t" style="left:10.5px;top:156.5px;font-size:11px;letter-spacing:-0.2px">Ql = 7,00</div>
<svg class="a" style="left:186.5px;top:51px" width="73" height="97" viewBox="0 0 73 97">
<rect x="1.2" y="1.2" width="68.8" height="93.6" fill="#fff" stroke="#000" stroke-width="2.4"/>
<rect x="50.3" y="21.2" width="7" height="31" rx="2.5" fill="#000"/>
<path d="M56 27 L65 16.5 Q68 14 70.5 14.5 V58.5 Q68 59 65 56.5 L56 46.5 Z" fill="#000"/>
<circle cx="64.6" cy="24.4" r="0.9" fill="#ccc"/><circle cx="64.6" cy="36.2" r="0.9" fill="#ccc"/><circle cx="64.6" cy="48" r="0.9" fill="#ccc"/>
<path d="M33 70 H69.5 M33 85.6 H69.5" stroke="#000" stroke-width="2"/>
</svg>
<div class="a" style="left:-1px;top:186.5px;width:300px;height:1.5px;background:#5a5a5a"></div>
<div class="a" style="left:0px;top:188px;width:62px;height:11px;background:#f4f4f4;border-left:1px solid #fff;border-bottom:1px solid #8a8a8a"></div>
<div class="t" style="left:11px;top:190.5px;font-family:'Liberation Serif',serif;font-weight:bold;font-size:8px;letter-spacing:0.1px">Parameters</div>
<div class="a" style="left:63px;top:188.8px;width:236px;height:10px;background:#00ff00"></div>
<div class="t" style="left:10px;top:209.5px;font-size:11px;letter-spacing:-0.2px">Qts:</div>
<div class="a" style="left:42px;top:209.3px;width:48px;height:11.5px;border-top:1px solid #a8a8a8;border-left:1px solid #a8a8a8;border-right:1px solid #fafafa;border-bottom:1px solid #fafafa;background:#ececec;text-align:center;font-size:11px;letter-spacing:-0.2px;line-height:9px">0,48</div>
<div class="t" style="left:94px;top:209.5px;font-size:11px;letter-spacing:-0.2px"></div>
<div class="t" style="left:10px;top:225.36px;font-size:11px;letter-spacing:-0.2px">Vas:</div>
<div class="a" style="left:42px;top:225.16000000000003px;width:48px;height:11.5px;border-top:1px solid #a8a8a8;border-left:1px solid #a8a8a8;border-right:1px solid #fafafa;border-bottom:1px solid #fafafa;background:#ececec;text-align:center;font-size:11px;letter-spacing:-0.2px;line-height:9px">91,0</div>
<div class="t" style="left:94px;top:225.36px;font-size:11px;letter-spacing:-0.2px">l</div>
<div class="t" style="left:10px;top:241.22000000000003px;font-size:11px;letter-spacing:-0.2px">Fs:</div>
<div class="a" style="left:42px;top:241.02000000000004px;width:48px;height:11.5px;border-top:1px solid #a8a8a8;border-left:1px solid #a8a8a8;border-right:1px solid #fafafa;border-bottom:1px solid #fafafa;background:#ececec;text-align:center;font-size:11px;letter-spacing:-0.2px;line-height:9px">48,00</div>
<div class="t" style="left:94px;top:241.22000000000003px;font-size:11px;letter-spacing:-0.2px">Hz</div>
<div class="t" style="left:10px;top:257.08px;font-size:11px;letter-spacing:-0.2px">Re:</div>
<div class="a" style="left:42px;top:256.88px;width:48px;height:11.5px;border-top:1px solid #a8a8a8;border-left:1px solid #a8a8a8;border-right:1px solid #fafafa;border-bottom:1px solid #fafafa;background:#ececec;text-align:center;font-size:11px;letter-spacing:-0.2px;line-height:9px">5,10</div>
<div class="t" style="left:94px;top:257.08px;font-size:11px;letter-spacing:-0.2px">ohm</div>
<div class="t" style="left:10px;top:272.94px;font-size:11px;letter-spacing:-0.2px">Le:</div>
<div class="a" style="left:42px;top:272.74px;width:48px;height:11.5px;border-top:1px solid #a8a8a8;border-left:1px solid #a8a8a8;border-right:1px solid #fafafa;border-bottom:1px solid #fafafa;background:#ececec;text-align:center;font-size:11px;letter-spacing:-0.2px;line-height:9px">0,43</div>
<div class="t" style="left:94px;top:272.94px;font-size:11px;letter-spacing:-0.2px"></div>
<div class="t" style="left:10px;top:288.8px;font-size:11px;letter-spacing:-0.2px">Xmax:</div>
<div class="a" style="left:42px;top:288.6px;width:48px;height:11.5px;border-top:1px solid #a8a8a8;border-left:1px solid #a8a8a8;border-right:1px solid #fafafa;border-bottom:1px solid #fafafa;background:#ececec;text-align:center;font-size:11px;letter-spacing:-0.2px;line-height:9px">0,005</div>
<div class="t" style="left:94px;top:288.8px;font-size:11px;letter-spacing:-0.2px">m</div>
<div class="t" style="left:10px;top:304.65999999999997px;font-size:11px;letter-spacing:-0.2px">Z:</div>
<div class="a" style="left:42px;top:304.46px;width:48px;height:11.5px;border-top:1px solid #a8a8a8;border-left:1px solid #a8a8a8;border-right:1px solid #fafafa;border-bottom:1px solid #fafafa;background:#ececec;text-align:center;font-size:11px;letter-spacing:-0.2px;line-height:9px">8,00</div>
<div class="t" style="left:94px;top:304.65999999999997px;font-size:11px;letter-spacing:-0.2px">ohm</div>
<div class="t" style="left:150px;top:209.5px;font-size:11px;letter-spacing:-0.2px">Qms:</div>
<div class="a" style="left:181.8px;top:209.3px;width:48px;height:11.5px;border-top:1px solid #a8a8a8;border-left:1px solid #a8a8a8;border-right:1px solid #fafafa;border-bottom:1px solid #fafafa;background:#ececec;text-align:center;font-size:11px;letter-spacing:-0.2px;line-height:9px">5,50</div>
<div class="t" style="left:234.4px;top:209.5px;font-size:11px;letter-spacing:-0.2px"></div>
<div class="t" style="left:150px;top:225.36px;font-size:11px;letter-spacing:-0.2px">Qes:</div>
<div class="a" style="left:181.8px;top:225.16000000000003px;width:48px;height:11.5px;border-top:1px solid #a8a8a8;border-left:1px solid #a8a8a8;border-right:1px solid #fafafa;border-bottom:1px solid #fafafa;background:#ececec;text-align:center;font-size:11px;letter-spacing:-0.2px;line-height:9px">0,53</div>
<div class="t" style="left:234.4px;top:225.36px;font-size:11px;letter-spacing:-0.2px"></div>
<div class="t" style="left:150px;top:241.22000000000003px;font-size:11px;letter-spacing:-0.2px">SPL:</div>
<div class="a" style="left:181.8px;top:241.02000000000004px;width:48px;height:11.5px;border-top:1px solid #a8a8a8;border-left:1px solid #a8a8a8;border-right:1px solid #fafafa;border-bottom:1px solid #fafafa;background:#ececec;text-align:center;font-size:11px;letter-spacing:-0.2px;line-height:9px">97,00</div>
<div class="t" style="left:234.4px;top:241.22000000000003px;font-size:11px;letter-spacing:-0.2px">dB</div>
<div class="t" style="left:150px;top:257.08px;font-size:11px;letter-spacing:-0.2px">Pe:</div>
<div class="a" style="left:181.8px;top:256.88px;width:48px;height:11.5px;border-top:1px solid #a8a8a8;border-left:1px solid #a8a8a8;border-right:1px solid #fafafa;border-bottom:1px solid #fafafa;background:#ececec;text-align:center;font-size:11px;letter-spacing:-0.2px;line-height:9px">150,0</div>
<div class="t" style="left:234.4px;top:257.08px;font-size:11px;letter-spacing:-0.2px">W</div>
<div class="t" style="left:150px;top:272.94px;font-size:11px;letter-spacing:-0.2px">BL:</div>
<div class="a" style="left:181.8px;top:272.74px;width:48px;height:11.5px;border-top:1px solid #a8a8a8;border-left:1px solid #a8a8a8;border-right:1px solid #fafafa;border-bottom:1px solid #fafafa;background:#ececec;text-align:center;font-size:11px;letter-spacing:-0.2px;line-height:9px">11,70</div>
<div class="t" style="left:234.4px;top:272.94px;font-size:11px;letter-spacing:-0.2px"></div>
<div class="t" style="left:150px;top:288.8px;font-size:11px;letter-spacing:-0.2px">dia:</div>
<div class="a" style="left:181.8px;top:288.6px;width:48px;height:11.5px;border-top:1px solid #a8a8a8;border-left:1px solid #a8a8a8;border-right:1px solid #fafafa;border-bottom:1px solid #fafafa;background:#ececec;text-align:center;font-size:11px;letter-spacing:-0.2px;line-height:9px">0,305</div>
<div class="t" style="left:234.4px;top:288.8px;font-size:11px;letter-spacing:-0.2px">m</div>
<div class="t" style="left:150px;top:304.65999999999997px;font-size:11px;letter-spacing:-0.2px">Sd:</div>
<div class="a" style="left:181.8px;top:304.46px;width:48px;height:11.5px;border-top:1px solid #a8a8a8;border-left:1px solid #a8a8a8;border-right:1px solid #fafafa;border-bottom:1px solid #fafafa;background:#ececec;text-align:center;font-size:11px;letter-spacing:-0.2px;line-height:9px">0,052</div>
<div class="t" style="left:234.4px;top:304.65999999999997px;font-size:11px;letter-spacing:-0.2px">m^2</div>
</div>
</div>
<div class="a" style="left:1059px;top:258px;width:308px;height:228px;border-radius:6px 6px 0 0;background:#dbe6f1;border:1px solid #505a64;box-shadow:inset 1px 1px 0 #f6f9fc,inset -1px -1px 0 #f6f9fc;overflow:hidden">
<div class="a" style="left:0;top:0;width:306px;height:24px;background:linear-gradient(#c1cfdf,#d6e2ef);border-radius:5px 5px 0 0;box-shadow:inset 1px 1px 0 #f2f6fa"></div>
<svg class="a" style="left:5px;top:6px" width="15" height="15" viewBox="0 0 15 15"><path d="M9.6 2.6 L10.6 6.2 L5 8.6 L2.2 12.8" fill="none" stroke="#000" stroke-width="2.5" stroke-linecap="round" stroke-linejoin="round"/><circle cx="10.2" cy="3.2" r="2" fill="#000"/><circle cx="2.6" cy="12.6" r="1.7" fill="#000"/></svg>
<div class="t" style="left:25px;top:7px;font-size:11.25px;letter-spacing:0.12px;color:#434f62">[3]vented : Eminence OEM 1214...</div>
<div class="a" style="left:205px;top:4px;width:31px;height:17px;border:1px solid #7d8ea4;border-radius:3px;background:linear-gradient(#c6d3e2,#dbe5f0);"><div class="a" style="left:9.5px;top:6px;width:11px;height:5px;border:1px solid #3c4450;border-radius:2px;background:#f8f8f8"></div></div>
<div class="a" style="left:238px;top:4px;width:31px;height:17px;border:1px solid #7d8ea4;border-radius:3px;background:linear-gradient(#c6d3e2,#dbe5f0);"><div class="a" style="left:9.5px;top:2.5px;width:11px;height:9px;border:1.5px solid #3c4450;border-radius:1px;background:#e8eef6"><div class="a" style="left:2px;top:2px;width:4px;height:2px;border:1px solid #3c4450"></div></div></div>
<div class="a" style="left:271px;top:4px;width:31px;height:17px;border:1px solid #7d8ea4;border-radius:3px;background:linear-gradient(#c6d3e2,#dbe5f0);"><svg class="a" style="left:8.5px;top:1.5px" width="14" height="11" viewBox="0 0 14 11"><path d="M3.5 2.5 L10.5 8.5 M10.5 2.5 L3.5 8.5" stroke="#3c4450" stroke-width="3.6" stroke-linecap="round"/><path d="M3.5 2.5 L10.5 8.5 M10.5 2.5 L3.5 8.5" stroke="#fafafa" stroke-width="1.7" stroke-linecap="round"/></svg></div>
<div class="a cl" style="left:4px;top:24px;width:298px;height:200px;background:#f0f0f0;border-top:1px solid #f8fafc">
<div class="a" style="left:0px;top:19px;width:300px;height:168px;border-top:1px solid #fff;border-left:1px solid #fff;border-right:1px solid #6e6e6e;border-bottom:1px solid #a0a0a0"></div>
<div class="a" style="left:1px;top:2px;width:40px;height:17px;background:#f0f0f0;border-top:1px solid #fff;border-left:1px solid #fff;border-right:2px solid #777;border-radius:2px 2px 0 0"></div>
<div class="t" style="left:6.5px;top:5.700000000000003px;font-size:11px;letter-spacing:-0.2px">Driver</div>
<div class="a" style="left:86px;top:2px;width:40px;height:17px;background:#f0f0f0;border-top:1px solid #fff;border-left:1px solid #fff;border-right:2px solid #777;border-radius:2px 2px 0 0"></div>
<div class="t" style="left:90px;top:5.700000000000003px;font-size:11px;letter-spacing:-0.2px">Vents</div>
<div class="a" style="left:126px;top:2px;width:42px;height:17px;background:#f0f0f0;border-top:1px solid #fff;border-left:1px solid #fff;border-right:2px solid #777;border-radius:2px 2px 0 0"></div>
<div class="t" style="left:132.5px;top:5.700000000000003px;font-size:11px;letter-spacing:-0.2px">Plot</div>
<div class="a" style="left:168px;top:2px;width:45px;height:17px;background:#f0f0f0;border-top:1px solid #fff;border-left:1px solid #fff;border-right:2px solid #777;border-radius:2px 2px 0 0"></div>
<div class="t" style="left:174.5px;top:5.700000000000003px;font-size:11px;letter-spacing:-0.2px">Project</div>
<div class="a" style="left:39px;top:0px;width:47px;height:20px;background:#f0f0f0;border-top:1px solid #fff;border-left:1px solid #fff;border-right:2px solid #777;border-radius:2px 2px 0 0"></div>
<div class="t" style="left:48.5px;top:3.6000000000000014px;font-size:11px;letter-spacing:-0.2px">Box</div>
<div class="a" style="left:6.5px;top:27px;width:175px;height:16px;border:1px solid #a0a0a0;border-right-color:#e8e8e8;border-bottom-color:#d8d8d8;background:#f0f0f0"></div>
<div class="t" style="left:8.5px;top:30.299999999999997px;font-size:11px;letter-spacing:-0.2px">vented</div>
<div class="a" style="left:186.5px;top:27px;width:71px;height:17px;border:1px solid #fff;border-right:2px solid #6a6a6a;border-bottom:2px solid #6a6a6a;background:#f0f0f0;text-align:center;font-size:11px;letter-spacing:-0.2px;line-height:14px">Box shape</div>
<div class="a" style="left:6.5px;top:52.5px;width:83px;height:94px;border:1px solid #a0a0a0;box-shadow:inset 1px 1px 0 #fff, 1px 1px 0 #fff"></div>
<div class="t" style="left:13px;top:48.5px;font-size:11px;letter-spacing:-0.2px;background:#f0f0f0;padding:0 1px">Front chamber:</div>
<div class="t" style="left:14px;top:64.5px;font-size:11px;letter-spacing:-0.2px;color:#000080">Volume:</div>
<div class="a" style="left:14.3px;top:79.3px;width:51px;height:19.5px;border-top:2px solid #6e6e6e;border-left:2px solid #6e6e6e;border-right:1px solid #f8f8f8;border-bottom:1px solid #f8f8f8;background:#fff;font-size:11px;letter-spacing:-0.2px;padding:2px 0 0 1.5px;line-height:13px">120</div>
<div class="a" style="left:72.5px;top:91.5px;width:1.5px;height:5.5px;background:#000"></div>
<div class="t" style="left:14px;top:104.5px;font-size:11px;letter-spacing:-0.2px;color:#000080">Tuning freq.:</div>
<div class="a" style="left:14.3px;top:119.5px;width:51px;height:19.5px;border-top:2px solid #6e6e6e;border-left:2px solid #6e6e6e;border-right:1px solid #f8f8f8;border-bottom:1px solid #f8f8f8;background:#fff;font-size:11px;letter-spacing:-0.2px;padding:2px 0 0 1.5px;line-height:13px">65,00</div>
<div class="t" style="left:72.5px;top:130.5px;font-size:7.5px;font-weight:bold;letter-spacing:-0.2px">Hz</div>
<div class="t" style="left:10.5px;top:156.5px;font-size:11px;letter-spacing:-0.2px">Ql = 7,00</div>
<svg class="a" style="left:186.5px;top:51px" width="73" height="97" viewBox="0 0 73 97">
<rect x="1.2" y="1.2" width="68.8" height="93.6" fill="#fff" stroke="#000" stroke-width="2.4"/>
<rect x="50.3" y="21.2" width="7" height="31" rx="2.5" fill="#000"/>
<path d="M56 27 L65 16.5 Q68 14 70.5 14.5 V58.5 Q68 59 65 56.5 L56 46.5 Z" fill="#000"/>
<circle cx="64.6" cy="24.4" r="0.9" fill="#ccc"/><circle cx="64.6" cy="36.2" r="0.9" fill="#ccc"/><circle cx="64.6" cy="48" r="0.9" fill="#ccc"/>
<path d="M33 70 H69.5 M33 85.6 H69.5" stroke="#000" stroke-width="2"/>
</svg>
<div class="a" style="left:-1px;top:186.5px;width:300px;height:1.5px;background:#5a5a5a"></div>
<div class="a" style="left:0px;top:188px;width:62px;height:11px;background:#f4f4f4;border-left:1px solid #fff;border-bottom:1px solid #8a8a8a"></div>
<div class="t" style="left:11px;top:190.5px;font-family:'Liberation Serif',serif;font-weight:bold;font-size:8px;letter-spacing:0.1px">Parameters</div>
<div class="a" style="left:63px;top:188.8px;width:236px;height:10px;background:#ffff00"></div>
</div>
</div>
<div class="a" style="left:-1px;top:278px;width:308px;height:228px;border-radius:6px 6px 0 0;background:#dbe6f1;border:1px solid #505a64;box-shadow:inset 1px 1px 0 #f6f9fc,inset -1px -1px 0 #f6f9fc;overflow:hidden">
<div class="a" style="left:0;top:0;width:306px;height:24px;background:linear-gradient(#c1cfdf,#d6e2ef);border-radius:5px 5px 0 0;box-shadow:inset 1px 1px 0 #f2f6fa"></div>
<svg class="a" style="left:5px;top:6px" width="15" height="15" viewBox="0 0 15 15"><path d="M9.6 2.6 L10.6 6.2 L5 8.6 L2.2 12.8" fill="none" stroke="#000" stroke-width="2.5" stroke-linecap="round" stroke-linejoin="round"/><circle cx="10.2" cy="3.2" r="2" fill="#000"/><circle cx="2.6" cy="12.6" r="1.7" fill="#000"/></svg>
<div class="t" style="left:25px;top:7px;font-size:11.25px;letter-spacing:0.12px;color:#434f62">[2]vented : Eminence OEM 1214...</div>
<div class="a" style="left:205px;top:4px;width:31px;height:17px;border:1px solid #7d8ea4;border-radius:3px;background:linear-gradient(#c6d3e2,#dbe5f0);"><div class="a" style="left:9.5px;top:6px;width:11px;height:5px;border:1px solid #3c4450;border-radius:2px;background:#f8f8f8"></div></div>
<div class="a" style="left:238px;top:4px;width:31px;height:17px;border:1px solid #7d8ea4;border-radius:3px;background:linear-gradient(#c6d3e2,#dbe5f0);"><div class="a" style="left:9.5px;top:2.5px;width:11px;height:9px;border:1.5px solid #3c4450;border-radius:1px;background:#e8eef6"><div class="a" style="left:2px;top:2px;width:4px;height:2px;border:1px solid #3c4450"></div></div></div>
<div class="a" style="left:271px;top:4px;width:31px;height:17px;border:1px solid #7d8ea4;border-radius:3px;background:linear-gradient(#c6d3e2,#dbe5f0);"><svg class="a" style="left:8.5px;top:1.5px" width="14" height="11" viewBox="0 0 14 11"><path d="M3.5 2.5 L10.5 8.5 M10.5 2.5 L3.5 8.5" stroke="#3c4450" stroke-width="3.6" stroke-linecap="round"/><path d="M3.5 2.5 L10.5 8.5 M10.5 2.5 L3.5 8.5" stroke="#fafafa" stroke-width="1.7" stroke-linecap="round"/></svg></div>
<div class="a cl" style="left:4px;top:24px;width:298px;height:200px;background:#f0f0f0;border-top:1px solid #f8fafc">
<div class="a" style="left:0px;top:19px;width:300px;height:168px;border-top:1px solid #fff;border-left:1px solid #fff;border-right:1px solid #6e6e6e;border-bottom:1px solid #a0a0a0"></div>
<div class="a" style="left:1px;top:2px;width:40px;height:17px;background:#f0f0f0;border-top:1px solid #fff;border-left:1px solid #fff;border-right:2px solid #777;border-radius:2px 2px 0 0"></div>
<div class="t" style="left:6.5px;top:5.700000000000003px;font-size:11px;letter-spacing:-0.2px">Driver</div>
<div class="a" style="left:86px;top:2px;width:40px;height:17px;background:#f0f0f0;border-top:1px solid #fff;border-left:1px solid #fff;border-right:2px solid #777;border-radius:2px 2px 0 0"></div>
<div class="t" style="left:90px;top:5.700000000000003px;font-size:11px;letter-spacing:-0.2px">Vents</div>
<div class="a" style="left:126px;top:2px;width:42px;height:17px;background:#f0f0f0;border-top:1px solid #fff;border-left:1px solid #fff;border-right:2px solid #777;border-radius:2px 2px 0 0"></div>
<div class="t" style="left:132.5px;top:5.700000000000003px;font-size:11px;letter-spacing:-0.2px">Plot</div>
<div class="a" style="left:168px;top:2px;width:45px;height:17px;background:#f0f0f0;border-top:1px solid #fff;border-left:1px solid #fff;border-right:2px solid #777;border-radius:2px 2px 0 0"></div>
<div class="t" style="left:174.5px;top:5.700000000000003px;font-size:11px;letter-spacing:-0.2px">Project</div>
<div class="a" style="left:39px;top:0px;width:47px;height:20px;background:#f0f0f0;border-top:1px solid #fff;border-left:1px solid #fff;border-right:2px solid #777;border-radius:2px 2px 0 0"></div>
<div class="t" style="left:48.5px;top:3.6000000000000014px;font-size:11px;letter-spacing:-0.2px">Box</div>
<div class="a" style="left:6.5px;top:27px;width:175px;height:16px;border:1px solid #a0a0a0;border-right-color:#e8e8e8;border-bottom-color:#d8d8d8;background:#f0f0f0"></div>
<div class="t" style="left:8.5px;top:30.299999999999997px;font-size:11px;letter-spacing:-0.2px">vented</div>
<div class="a" style="left:186.5px;top:27px;width:71px;height:17px;border:1px solid #fff;border-right:2px solid #6a6a6a;border-bottom:2px solid #6a6a6a;background:#f0f0f0;text-align:center;font-size:11px;letter-spacing:-0.2px;line-height:14px">Box shape</div>
<div class="a" style="left:6.5px;top:52.5px;width:83px;height:94px;border:1px solid #a0a0a0;box-shadow:inset 1px 1px 0 #fff, 1px 1px 0 #fff"></div>
<div class="t" style="left:13px;top:48.5px;font-size:11px;letter-spacing:-0.2px;background:#f0f0f0;padding:0 1px">Front chamber:</div>
<div class="t" style="left:14px;top:64.5px;font-size:11px;letter-spacing:-0.2px;color:#000080">Volume:</div>
<div class="a" style="left:14.3px;top:79.3px;width:51px;height:19.5px;border-top:2px solid #6e6e6e;border-left:2px solid #6e6e6e;border-right:1px solid #f8f8f8;border-bottom:1px solid #f8f8f8;background:#fff;font-size:11px;letter-spacing:-0.2px;padding:2px 0 0 1.5px;line-height:13px">100,0</div>
<div class="a" style="left:72.5px;top:91.5px;width:1.5px;height:5.5px;background:#000"></div>
<div class="t" style="left:14px;top:104.5px;font-size:11px;letter-spacing:-0.2px;color:#000080">Tuning freq.:</div>
<div class="a" style="left:14.3px;top:119.5px;width:51px;height:19.5px;border-top:2px solid #6e6e6e;border-left:2px solid #6e6e6e;border-right:1px solid #f8f8f8;border-bottom:1px solid #f8f8f8;background:#fff;font-size:11px;letter-spacing:-0.2px;padding:2px 0 0 1.5px;line-height:13px">80</div>
<div class="t" style="left:72.5px;top:130.5px;font-size:7.5px;font-weight:bold;letter-spacing:-0.2px">Hz</div>
<div class="t" style="left:10.5px;top:156.5px;font-size:11px;letter-spacing:-0.2px">Ql = 7,00</div>
<svg class="a" style="left:186.5px;top:51px" width="73" height="97" viewBox="0 0 73 97">
<rect x="1.2" y="1.2" width="68.8" height="93.6" fill="#fff" stroke="#000" stroke-width="2.4"/>
<rect x="50.3" y="21.2" width="7" height="31" rx="2.5" fill="#000"/>
<path d="M56 27 L65 16.5 Q68 14 70.5 14.5 V58.5 Q68 59 65 56.5 L56 46.5 Z" fill="#000"/>
<circle cx="64.6" cy="24.4" r="0.9" fill="#ccc"/><circle cx="64.6" cy="36.2" r="0.9" fill="#ccc"/><circle cx="64.6" cy="48" r="0.9" fill="#ccc"/>
<path d="M33 70 H69.5 M33 85.6 H69.5" stroke="#000" stroke-width="2"/>
</svg>
<div class="a" style="left:-1px;top:186.5px;width:300px;height:1.5px;background:#5a5a5a"></div>
<div class="a" style="left:0px;top:188px;width:62px;height:11px;background:#f4f4f4;border-left:1px solid #fff;border-bottom:1px solid #8a8a8a"></div>
<div class="t" style="left:11px;top:190.5px;font-family:'Liberation Serif',serif;font-weight:bold;font-size:8px;letter-spacing:0.1px">Parameters</div>
<div class="a" style="left:63px;top:188.8px;width:236px;height:10px;background:#0080c0"></div>
</div>
</div>
<div class="a" style="left:-1px;top:58px;width:308px;height:228px;border-radius:6px 6px 0 0;background:#dbe6f1;border:1px solid #505a64;box-shadow:inset 1px 1px 0 #f6f9fc,inset -1px -1px 0 #f6f9fc;overflow:hidden">
<div class="a" style="left:0;top:0;width:306px;height:24px;background:linear-gradient(#c1cfdf,#d6e2ef);border-radius:5px 5px 0 0;box-shadow:inset 1px 1px 0 #f2f6fa"></div>
<svg class="a" style="left:5px;top:6px" width="15" height="15" viewBox="0 0 15 15"><path d="M9.6 2.6 L10.6 6.2 L5 8.6 L2.2 12.8" fill="none" stroke="#000" stroke-width="2.5" stroke-linecap="round" stroke-linejoin="round"/><circle cx="10.2" cy="3.2" r="2" fill="#000"/><circle cx="2.6" cy="12.6" r="1.7" fill="#000"/></svg>
<div class="t" style="left:25px;top:7px;font-size:11.25px;letter-spacing:0.12px;color:#434f62">[1]vented : Eminence OEM 1214...</div>
<div class="a" style="left:205px;top:4px;width:31px;height:17px;border:1px solid #7d8ea4;border-radius:3px;background:linear-gradient(#c6d3e2,#dbe5f0);"><div class="a" style="left:9.5px;top:6px;width:11px;height:5px;border:1px solid #3c4450;border-radius:2px;background:#f8f8f8"></div></div>
<div class="a" style="left:238px;top:4px;width:31px;height:17px;border:1px solid #7d8ea4;border-radius:3px;background:linear-gradient(#c6d3e2,#dbe5f0);"><div class="a" style="left:9.5px;top:2.5px;width:11px;height:9px;border:1.5px solid #3c4450;border-radius:1px;background:#e8eef6"><div class="a" style="left:2px;top:2px;width:4px;height:2px;border:1px solid #3c4450"></div></div></div>
<div class="a" style="left:271px;top:4px;width:31px;height:17px;border:1px solid #7d8ea4;border-radius:3px;background:linear-gradient(#c6d3e2,#dbe5f0);"><svg class="a" style="left:8.5px;top:1.5px" width="14" height="11" viewBox="0 0 14 11"><path d="M3.5 2.5 L10.5 8.5 M10.5 2.5 L3.5 8.5" stroke="#3c4450" stroke-width="3.6" stroke-linecap="round"/><path d="M3.5 2.5 L10.5 8.5 M10.5 2.5 L3.5 8.5" stroke="#fafafa" stroke-width="1.7" stroke-linecap="round"/></svg></div>
<div class="a cl" style="left:4px;top:24px;width:298px;height:200px;background:#f0f0f0;border-top:1px solid #f8fafc">
<div class="a" style="left:0px;top:19px;width:300px;height:168px;border-top:1px solid #fff;border-left:1px solid #fff;border-right:1px solid #6e6e6e;border-bottom:1px solid #a0a0a0"></div>
<div class="a" style="left:1px;top:2px;width:40px;height:17px;background:#f0f0f0;border-top:1px solid #fff;border-left:1px solid #fff;border-right:2px solid #777;border-radius:2px 2px 0 0"></div>
<div class="t" style="left:6.5px;top:5.700000000000003px;font-size:11px;letter-spacing:-0.2px">Driver</div>
<div class="a" style="left:86px;top:2px;width:40px;height:17px;background:#f0f0f0;border-top:1px solid #fff;border-left:1px solid #fff;border-right:2px solid #777;border-radius:2px 2px 0 0"></div>
<div class="t" style="left:90px;top:5.700000000000003px;font-size:11px;letter-spacing:-0.2px">Vents</div>
<div class="a" style="left:126px;top:2px;width:42px;height:17px;background:#f0f0f0;border-top:1px solid #fff;border-left:1px solid #fff;border-right:2px solid #777;border-radius:2px 2px 0 0"></div>
<div class="t" style="left:132.5px;top:5.700000000000003px;font-size:11px;letter-spacing:-0.2px">Plot</div>
<div class="a" style="left:168px;top:2px;width:45px;height:17px;background:#f0f0f0;border-top:1px solid #fff;border-left:1px solid #fff;border-right:2px solid #777;border-radius:2px 2px 0 0"></div>
<div class="t" style="left:174.5px;top:5.700000000000003px;font-size:11px;letter-spacing:-0.2px">Project</div>
<div class="a" style="left:39px;top:0px;width:47px;height:20px;background:#f0f0f0;border-top:1px solid #fff;border-left:1px solid #fff;border-right:2px solid #777;border-radius:2px 2px 0 0"></div>
<div class="t" style="left:48.5px;top:3.6000000000000014px;font-size:11px;letter-spacing:-0.2px">Box</div>
<div class="a" style="left:6.5px;top:27px;width:175px;height:16px;border:1px solid #a0a0a0;border-right-color:#e8e8e8;border-bottom-color:#d8d8d8;background:#f0f0f0"></div>
<div class="t" style="left:8.5px;top:30.299999999999997px;font-size:11px;letter-spacing:-0.2px">vented</div>
<div class="a" style="left:186.5px;top:27px;width:71px;height:17px;border:1px solid #fff;border-right:2px solid #6a6a6a;border-bottom:2px solid #6a6a6a;background:#f0f0f0;text-align:center;font-size:11px;letter-spacing:-0.2px;line-height:14px">Box shape</div>
<div class="a" style="left:6.5px;top:52.5px;width:83px;height:94px;border:1px solid #a0a0a0;box-shadow:inset 1px 1px 0 #fff, 1px 1px 0 #fff"></div>
<div class="t" style="left:13px;top:48.5px;font-size:11px;letter-spacing:-0.2px;background:#f0f0f0;padding:0 1px">Front chamber:</div>
<div class="t" style="left:14px;top:64.5px;font-size:11px;letter-spacing:-0.2px;color:#000080">Volume:</div>
<div class="a" style="left:14.3px;top:79.3px;width:51px;height:19.5px;border-top:2px solid #6e6e6e;border-left:2px solid #6e6e6e;border-right:1px solid #f8f8f8;border-bottom:1px solid #f8f8f8;background:#fff;font-size:11px;letter-spacing:-0.2px;padding:2px 0 0 1.5px;line-height:13px">100</div>
<div class="a" style="left:72.5px;top:91.5px;width:1.5px;height:5.5px;background:#000"></div>
<div class="t" style="left:14px;top:104.5px;font-size:11px;letter-spacing:-0.2px;color:#000080">Tuning freq.:</div>
<div class="a" style="left:14.3px;top:119.5px;width:51px;height:19.5px;border-top:2px solid #6e6e6e;border-left:2px solid #6e6e6e;border-right:1px solid #f8f8f8;border-bottom:1px solid #f8f8f8;background:#fff;font-size:11px;letter-spacing:-0.2px;padding:2px 0 0 1.5px;line-height:13px">50</div>
<div class="t" style="left:72.5px;top:130.5px;font-size:7.5px;font-weight:bold;letter-spacing:-0.2px">Hz</div>
<div class="t" style="left:10.5px;top:156.5px;font-size:11px;letter-spacing:-0.2px">Ql = 7,00</div>
<svg class="a" style="left:186.5px;top:51px" width="73" height="97" viewBox="0 0 73 97">
<rect x="1.2" y="1.2" width="68.8" height="93.6" fill="#fff" stroke="#000" stroke-width="2.4"/>
<rect x="50.3" y="21.2" width="7" height="31" rx="2.5" fill="#000"/>
<path d="M56 27 L65 16.5 Q68 14 70.5 14.5 V58.5 Q68 59 65 56.5 L56 46.5 Z" fill="#000"/>
<circle cx="64.6" cy="24.4" r="0.9" fill="#ccc"/><circle cx="64.6" cy="36.2" r="0.9" fill="#ccc"/><circle cx="64.6" cy="48" r="0.9" fill="#ccc"/>
<path d="M33 70 H69.5 M33 85.6 H69.5" stroke="#000" stroke-width="2"/>
</svg>
<div class="a" style="left:-1px;top:186.5px;width:300px;height:1.5px;background:#5a5a5a"></div>
<div class="a" style="left:0px;top:188px;width:62px;height:11px;background:#f4f4f4;border-left:1px solid #fff;border-bottom:1px solid #8a8a8a"></div>
<div class="t" style="left:11px;top:190.5px;font-family:'Liberation Serif',serif;font-weight:bold;font-size:8px;letter-spacing:0.1px">Parameters</div>
<div class="a" style="left:63px;top:188.8px;width:236px;height:10px;background:#0000ff"></div>
</div>
</div>
</body></html>
